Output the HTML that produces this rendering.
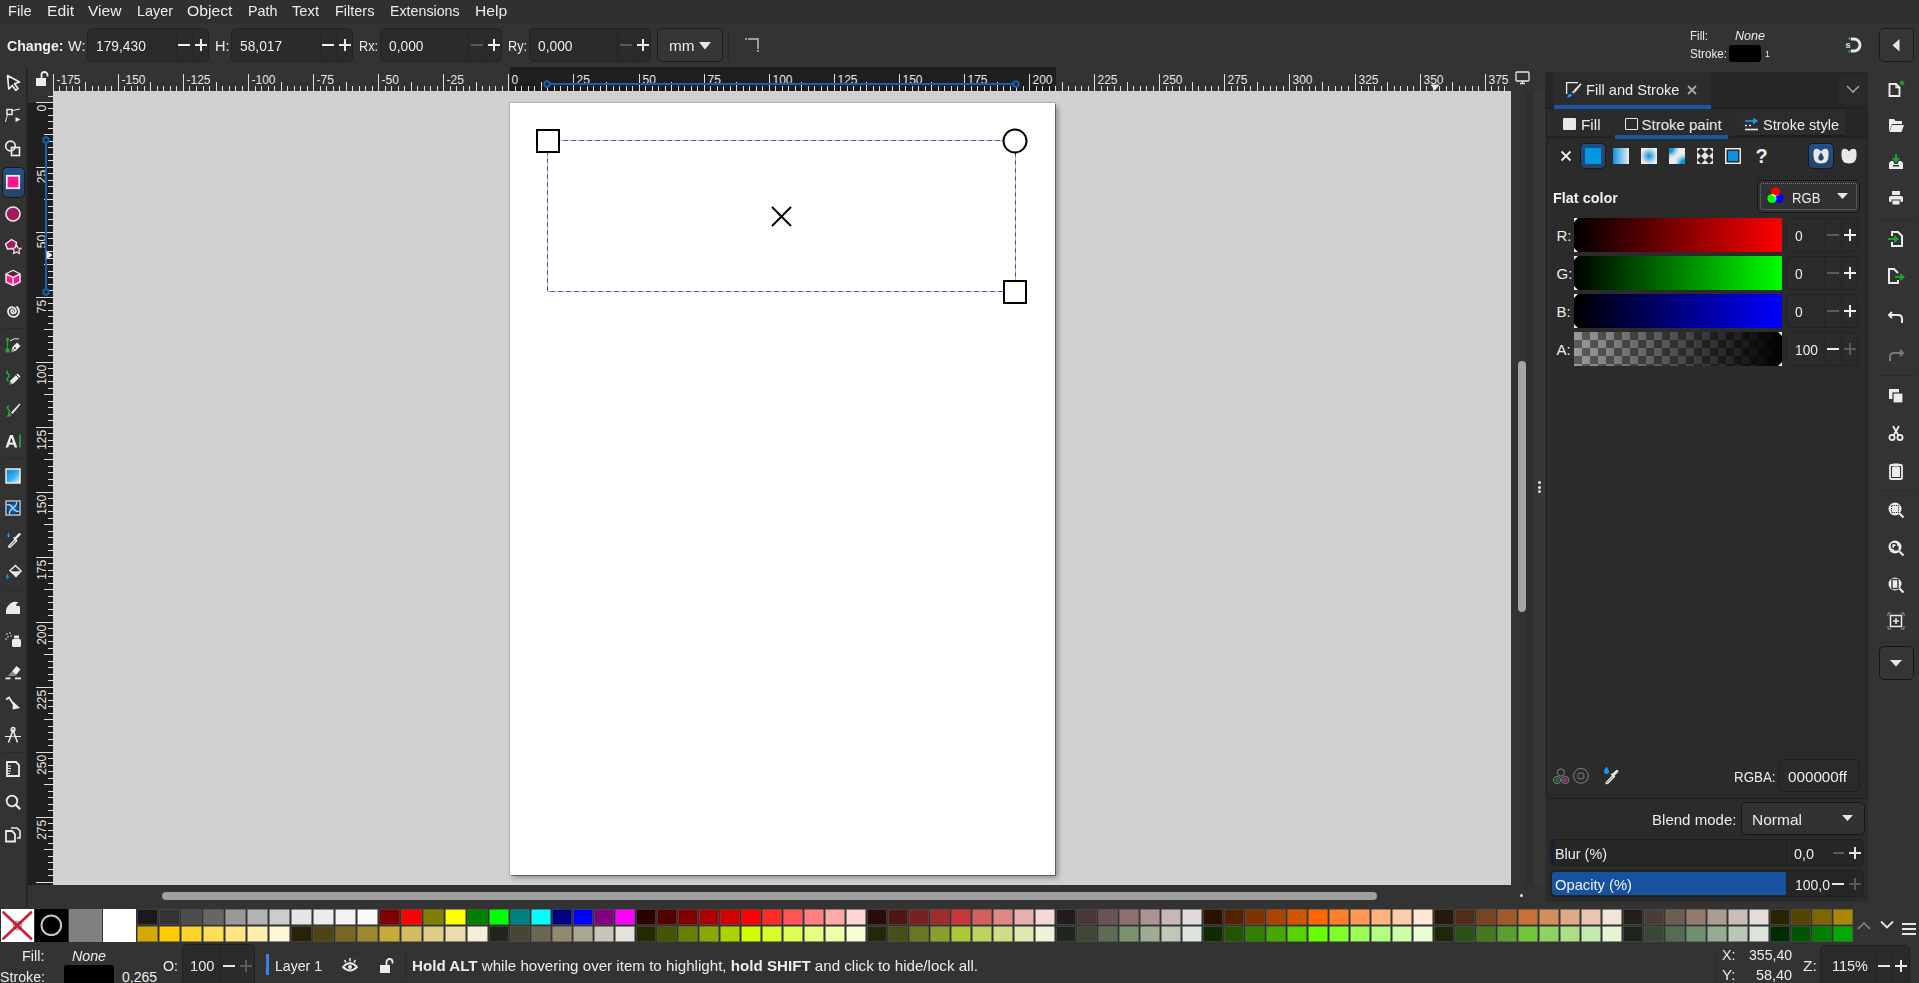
<!DOCTYPE html><html><head><meta charset="utf-8"><style>
html,body{margin:0;padding:0;width:1919px;height:983px;overflow:hidden;background:#333333;font-family:"Liberation Sans", sans-serif;}
div{box-sizing:border-box;}
svg{position:absolute;overflow:visible;}
</style></head><body>
<div style="position:absolute;left:0px;top:0px;width:1919px;height:23px;background:#303030;border-bottom:1px solid #2a2a2a"></div>
<div style="position:absolute;left:7.5px;top:3px;font-size:15px;line-height:1;color:#ececec;white-space:nowrap;transform:scaleX(0.9770);transform-origin:0 0;">File</div>
<div style="position:absolute;left:46.5px;top:3px;font-size:15px;line-height:1;color:#ececec;white-space:nowrap;transform:scaleX(1.0486);transform-origin:0 0;">Edit</div>
<div style="position:absolute;left:88px;top:3px;font-size:15px;line-height:1;color:#ececec;white-space:nowrap;transform:scaleX(1.0393);transform-origin:0 0;">View</div>
<div style="position:absolute;left:136.5px;top:3px;font-size:15px;line-height:1;color:#ececec;white-space:nowrap;transform:scaleX(0.9592);transform-origin:0 0;">Layer</div>
<div style="position:absolute;left:187px;top:3px;font-size:15px;line-height:1;color:#ececec;white-space:nowrap;transform:scaleX(1.0494);transform-origin:0 0;">Object</div>
<div style="position:absolute;left:247.5px;top:3px;font-size:15px;line-height:1;color:#ececec;white-space:nowrap;transform:scaleX(0.9559);transform-origin:0 0;">Path</div>
<div style="position:absolute;left:292.3px;top:3px;font-size:15px;line-height:1;color:#ececec;white-space:nowrap;transform:scaleX(0.9813);transform-origin:0 0;">Text</div>
<div style="position:absolute;left:334.6px;top:3px;font-size:15px;line-height:1;color:#ececec;white-space:nowrap;transform:scaleX(0.9650);transform-origin:0 0;">Filters</div>
<div style="position:absolute;left:389.7px;top:3px;font-size:15px;line-height:1;color:#ececec;white-space:nowrap;transform:scaleX(0.9486);transform-origin:0 0;">Extensions</div>
<div style="position:absolute;left:474.6px;top:3px;font-size:15px;line-height:1;color:#ececec;white-space:nowrap;transform:scaleX(1.0440);transform-origin:0 0;">Help</div>
<div style="position:absolute;left:0px;top:23px;width:1919px;height:44px;background:#333333"></div>
<div style="position:absolute;left:6.5px;top:38px;font-size:15px;line-height:1;color:#f0f0f0;white-space:nowrap;transform:scaleX(0.9419);transform-origin:0 0;"><b>Change:</b></div>
<div style="position:absolute;left:67.5px;top:38px;font-size:15px;line-height:1;color:#ececec;white-space:nowrap;transform:scaleX(0.9689);transform-origin:0 0;">W:</div>
<div style="position:absolute;left:87px;top:28px;width:122px;height:34px;background:#2b2b2b;border:1px solid #222;border-radius:5px"></div>
<div style="position:absolute;left:176px;top:29px;width:1px;height:32px;background:#262626"></div>
<div style="position:absolute;left:192px;top:29px;width:1px;height:32px;background:#262626"></div>
<div style="position:absolute;left:96px;top:37.5px;font-size:15px;line-height:1;color:#ececec;white-space:nowrap;transform:scaleX(0.9200);transform-origin:0 0;">179,430</div>
<div style="position:absolute;left:178.0px;top:44.0px;width:12px;height:2px;background:#ececec"></div>
<div style="position:absolute;left:194.5px;top:44.0px;width:12px;height:2px;background:#ececec"></div>
<div style="position:absolute;left:199.5px;top:39.0px;width:2px;height:12px;background:#ececec"></div>
<div style="position:absolute;left:215px;top:38px;font-size:15px;line-height:1;color:#ececec;white-space:nowrap;transform:scaleX(0.9667);transform-origin:0 0;">H:</div>
<div style="position:absolute;left:231px;top:28px;width:122px;height:34px;background:#2b2b2b;border:1px solid #222;border-radius:5px"></div>
<div style="position:absolute;left:320px;top:29px;width:1px;height:32px;background:#262626"></div>
<div style="position:absolute;left:336px;top:29px;width:1px;height:32px;background:#262626"></div>
<div style="position:absolute;left:240px;top:37.5px;font-size:15px;line-height:1;color:#ececec;white-space:nowrap;transform:scaleX(0.9200);transform-origin:0 0;">58,017</div>
<div style="position:absolute;left:322.0px;top:44.0px;width:12px;height:2px;background:#ececec"></div>
<div style="position:absolute;left:338.5px;top:44.0px;width:12px;height:2px;background:#ececec"></div>
<div style="position:absolute;left:343.5px;top:39.0px;width:2px;height:12px;background:#ececec"></div>
<div style="position:absolute;left:359px;top:38px;font-size:15px;line-height:1;color:#ececec;white-space:nowrap;transform:scaleX(0.8444);transform-origin:0 0;">Rx:</div>
<div style="position:absolute;left:380px;top:28px;width:122px;height:34px;background:#2b2b2b;border:1px solid #222;border-radius:5px"></div>
<div style="position:absolute;left:468px;top:29px;width:1px;height:32px;background:#262626"></div>
<div style="position:absolute;left:485px;top:29px;width:1px;height:32px;background:#262626"></div>
<div style="position:absolute;left:389px;top:37.5px;font-size:15px;line-height:1;color:#ececec;white-space:nowrap;transform:scaleX(0.9200);transform-origin:0 0;">0,000</div>
<div style="position:absolute;left:470.5px;top:44.0px;width:12px;height:2px;background:#5a5a5a"></div>
<div style="position:absolute;left:487.5px;top:44.0px;width:12px;height:2px;background:#ececec"></div>
<div style="position:absolute;left:492.5px;top:39.0px;width:2px;height:12px;background:#ececec"></div>
<div style="position:absolute;left:508px;top:38px;font-size:15px;line-height:1;color:#ececec;white-space:nowrap;transform:scaleX(0.8444);transform-origin:0 0;">Ry:</div>
<div style="position:absolute;left:529px;top:28px;width:122px;height:34px;background:#2b2b2b;border:1px solid #222;border-radius:5px"></div>
<div style="position:absolute;left:617px;top:29px;width:1px;height:32px;background:#262626"></div>
<div style="position:absolute;left:634px;top:29px;width:1px;height:32px;background:#262626"></div>
<div style="position:absolute;left:538px;top:37.5px;font-size:15px;line-height:1;color:#ececec;white-space:nowrap;transform:scaleX(0.9200);transform-origin:0 0;">0,000</div>
<div style="position:absolute;left:619.5px;top:44.0px;width:12px;height:2px;background:#5a5a5a"></div>
<div style="position:absolute;left:636.5px;top:44.0px;width:12px;height:2px;background:#ececec"></div>
<div style="position:absolute;left:641.5px;top:39.0px;width:2px;height:12px;background:#ececec"></div>
<div style="position:absolute;left:657px;top:28px;width:66px;height:34px;background:#353535;border:1px solid #1c1c1c;border-radius:5px"></div>
<div style="position:absolute;left:669px;top:38px;font-size:15px;line-height:1;color:#ececec;white-space:nowrap;transform:scaleX(1.0200);transform-origin:0 0;">mm</div>
<svg style="left:699px;top:41.5px" width="12" height="8"><path d="M0 0 L12 0 L6 7.5 Z" fill="#e6e6e6"/></svg>
<div style="position:absolute;left:728px;top:30px;width:1px;height:32px;background:#2a2a2a"></div>
<svg style="left:744px;top:37px" width="16" height="16"><path d="M1 1 H3 V3 H1 Z M4 1 H15 V12 H13 V3 H4 Z M13 13 H15 V15 H13 Z" fill="#9a9a9a"/></svg>
<div style="position:absolute;left:1690px;top:30px;font-size:12px;line-height:1;color:#ececec;white-space:nowrap;transform:scaleX(0.9640);transform-origin:0 0;">Fill:</div>
<div style="position:absolute;left:1735px;top:30px;font-size:12px;line-height:1;color:#ececec;white-space:nowrap;transform:scaleX(1.0458);transform-origin:0 0;"><i>None</i></div>
<div style="position:absolute;left:1690px;top:48px;font-size:12px;line-height:1;color:#ececec;white-space:nowrap;transform:scaleX(0.9737);transform-origin:0 0;">Stroke:</div>
<div style="position:absolute;left:1729px;top:45px;width:32px;height:17px;background:#000;border-radius:3px"></div>
<div style="position:absolute;left:1765px;top:50px;font-size:9px;line-height:1;color:#ececec;white-space:nowrap;transform:scaleX(0.9500);transform-origin:0 0;">1</div>
<svg style="left:1844px;top:35px" width="20" height="20"><path d="M7 4 H10 A6 6 0 0 1 10 16 H7" stroke="#e6e6e6" stroke-width="3" fill="none"/><circle cx="5.5" cy="3.6" r="1.4" fill="#1fa030"/><circle cx="5.5" cy="16.4" r="1.4" fill="#1fa030"/><text x="1.5" y="13" font-size="9" font-weight="bold" fill="#e6e6e6" font-family="Liberation Sans">s</text></svg>
<div style="position:absolute;left:1879px;top:28px;width:35px;height:34px;background:#353535;border:1px solid #1c1c1c;border-radius:5px"></div>
<svg style="left:1892px;top:38.5px" width="10" height="13"><path d="M7.5 0 V12.5 L0.5 6.25 Z" fill="#e6e6e6"/></svg>
<div style="position:absolute;left:0px;top:67px;width:26px;height:840px;background:#333333"></div>
<div style="position:absolute;left:26px;top:67px;width:2px;height:840px;background:#262626"></div>
<div style="position:absolute;left:1.5px;top:166.5px;width:23px;height:31px;background:linear-gradient(#1f4f8e,#264466);border:1px solid #1a1a1a;border-radius:5px"></div>
<svg style="left:4px;top:74px" width="18" height="18" viewBox="0 0 18 18"><path d="M3.5 1.5 L15.5 8 L10.5 9.8 L14 14.5 L11.8 16.3 L8.3 11.5 L4.8 15 Z" fill="#2a2a2a" stroke="#ececec" stroke-width="1.7" stroke-linejoin="round"/></svg>
<svg style="left:4px;top:106px" width="18" height="18" viewBox="0 0 18 18"><rect x="3" y="3.5" width="5" height="5" fill="#333" stroke="#ececec" stroke-width="1.5"/><path d="M1.5 16 Q2.5 11 3.5 9 M8 5 Q12 3.5 16 3" stroke="#ececec" stroke-width="1" fill="none"/><path d="M11.5 11 L16.5 13.5 L11.5 16 Z" fill="#ececec"/></svg>
<svg style="left:4px;top:139px" width="18" height="18" viewBox="0 0 18 18"><circle cx="6.5" cy="7" r="4.8" fill="none" stroke="#ececec" stroke-width="1.7"/><rect x="7.5" y="8.5" width="8" height="8" fill="none" stroke="#ececec" stroke-width="1.7"/></svg>
<svg style="left:4px;top:173px" width="18" height="18" viewBox="0 0 18 18"><rect x="2.8" y="2.8" width="12.4" height="12.4" fill="#ff1493" stroke="#ececec" stroke-width="1.8"/></svg>
<svg style="left:4px;top:205px" width="18" height="18" viewBox="0 0 18 18"><circle cx="9" cy="9" r="7" fill="#a6195e" stroke="#ececec" stroke-width="1.6"/></svg>
<svg style="left:4px;top:237px" width="18" height="18" viewBox="0 0 18 18"><path d="M1.5 7 L7.5 2.5 L12.5 5.5 L11 11.5 L3.5 12 Z" fill="#a6195e" stroke="#ececec" stroke-width="1.4"/><path d="M12.5 8 L14 11 L17 11.3 L14.8 13.4 L15.4 16.5 L12.5 15 L9.6 16.5 L10.2 13.4 L8 11.3 L11 11 Z" fill="#6a2048" stroke="#ececec" stroke-width="1.2"/></svg>
<svg style="left:4px;top:269px" width="18" height="18" viewBox="0 0 18 18"><path d="M9 1.5 L16 5 V13 L9 16.5 L2 13 V5 Z" fill="#ff1493" stroke="#ececec" stroke-width="1.5"/><path d="M2.6 5.1 L9 1.9 L15.4 5.1 L9 8.4 Z" fill="#5a2040"/><path d="M2 5 L9 8.5 L16 5 M9 8.5 V16.5" stroke="#ececec" stroke-width="1.5" fill="none"/></svg>
<svg style="left:4px;top:302px" width="18" height="18" viewBox="0 0 18 18"><path d="M9.5 9 a1.2 1.2 0 0 0 -2.4 0.3 a2.5 2.5 0 0 0 4.9 0.2 a4 4 0 0 0 -8 -0.5 a5.5 5.5 0 0 0 11 0.8 a6.5 6.5 0 0 0 -2 -4.8" fill="none" stroke="#ececec" stroke-width="1.8" stroke-linecap="round"/></svg>
<svg style="left:4px;top:336px" width="18" height="18" viewBox="0 0 18 18"><path d="M3.5 5 V13" stroke="#27a33a" stroke-width="1.2"/><circle cx="3.5" cy="3.5" r="1.8" fill="#27a33a"/><rect x="1.5" y="12.5" width="4" height="4" fill="#27a33a"/><path d="M6 5 Q10 1.5 15 3" stroke="#ececec" stroke-width="1" fill="none"/><path d="M7 16.5 L8.5 11 L13 6.5 L16.5 10 L12 14.5 Z" fill="#ececec"/><path d="M7.5 15.8 L10.5 12.8" stroke="#333" stroke-width="1"/><circle cx="11" cy="12" r="0.9" fill="#333"/></svg>
<svg style="left:4px;top:368px" width="18" height="18" viewBox="0 0 18 18"><path d="M4 3 Q1.5 4.5 4 6 Q6.5 7.5 4 9.5 Q2 11.5 4.5 13" stroke="#27a33a" stroke-width="1.6" fill="none"/><path d="M5.5 16.5 L6.5 12.5 L13.5 5.5 L16.5 8.5 L9.5 15.5 Z" fill="#ececec"/><path d="M5.5 16.5 L6.8 13.8 L8.2 15.2 Z" fill="#27a33a"/><path d="M12 7 L15 10" stroke="#333" stroke-width="1"/></svg>
<svg style="left:4px;top:400px" width="18" height="18" viewBox="0 0 18 18"><path d="M5 6 Q2 7.5 4.5 9.5 Q7 11.5 4 13.5" stroke="#27a33a" stroke-width="1.6" fill="none"/><path d="M3 17 Q3.5 13.5 6 13 L7.5 14.5 Q7 17 3 17 Z" fill="#27a33a"/><path d="M7 12.5 L15.5 3.5 L16.5 4.5 L8.5 14 Z" fill="#ececec"/></svg>
<svg style="left:4px;top:432px" width="18" height="18" viewBox="0 0 18 18"><path d="M1.5 15.5 L6 3 H8.8 L13.3 15.5 H10.6 L9.7 12.8 H5.1 L4.2 15.5 Z M5.8 10.6 H9 L7.4 5.7 Z" fill="#ececec"/><rect x="15" y="2.5" width="1.8" height="13" fill="#27a33a"/></svg>
<svg style="left:4px;top:467px" width="18" height="18" viewBox="0 0 18 18"><defs><linearGradient id="gt" x1="0" y1="0" x2="1" y2="1"><stop offset="0" stop-color="#0a78d0"/><stop offset="0.55" stop-color="#38b0f0"/><stop offset="1" stop-color="#e8f4fc"/></linearGradient></defs><rect x="2" y="2" width="14" height="14" fill="url(#gt)" stroke="#ececec" stroke-width="1.5"/></svg>
<svg style="left:4px;top:499px" width="18" height="18" viewBox="0 0 18 18"><defs><radialGradient id="mt"><stop offset="0" stop-color="#1a90e0"/><stop offset="1" stop-color="#0a2a50"/></radialGradient></defs><rect x="2" y="2" width="14" height="14" fill="url(#mt)" stroke="#d8d8d8" stroke-width="1.3"/><path d="M9 9 Q5 4 3 6 M9 9 Q14 5 12 3 M9 9 Q13 14 15 12 M9 9 Q4 13 6 15" stroke="#9ad4ff" stroke-width="1.5" fill="none"/></svg>
<svg style="left:4px;top:531px" width="18" height="18" viewBox="0 0 18 18"><path d="M4.5 1.5 Q2 5 4.5 6.5 Q7 5 4.5 1.5 Z" fill="#1a9ae0"/><path d="M5 16 L4.5 15.5 L11 8.5 L12.5 10 L6 16.5 Z" fill="none" stroke="#ececec" stroke-width="1.3"/><path d="M10 7 L14.5 2.5 Q15.5 1.5 16.5 2.5 Q17.5 3.5 16 4.5 L11.5 9 Z" fill="#ececec"/><path d="M9.5 6.5 L13 10" stroke="#ececec" stroke-width="1.6"/></svg>
<svg style="left:4px;top:563px" width="18" height="18" viewBox="0 0 18 18"><path d="M3.5 11 Q1 14.5 3.5 16 Q6 14.5 3.5 11 Z" fill="#1a9ae0"/><path d="M6 7.5 L11.5 2.5 L17 8 L12 13.5 Z" fill="none" stroke="#ececec" stroke-width="1.5"/><path d="M6.5 8 L11 8.5 L16 8 L12 13 Z" fill="#ececec"/></svg>
<svg style="left:4px;top:598px" width="18" height="18" viewBox="0 0 18 18"><path d="M2 16 V11.5 Q4 6 9 4 Q13 3 14.5 5 Q12 5 12 8 Q13.5 7.5 16 8.5 V16 Z" fill="#ececec"/></svg>
<svg style="left:4px;top:630px" width="18" height="18" viewBox="0 0 18 18"><rect x="8" y="9" width="9" height="8" rx="1.5" fill="#ececec"/><rect x="10" y="5.5" width="5" height="3" fill="#ececec"/><circle cx="3" cy="4" r="0.9" fill="#aaa"/><circle cx="6" cy="3" r="0.9" fill="#aaa"/><circle cx="4" cy="7" r="0.9" fill="#aaa"/><circle cx="7" cy="6" r="0.9" fill="#aaa"/><circle cx="2" cy="9" r="0.9" fill="#aaa"/></svg>
<svg style="left:4px;top:662px" width="18" height="18" viewBox="0 0 18 18"><path d="M8 9.5 L12.5 4 L16.5 7.5 L12 13 Z" fill="#ececec"/><path d="M4 13.5 L8 9.5 L12 13 L11 14 H6 Z" fill="#8a8a8a"/><rect x="1.5" y="15.5" width="5" height="1.8" fill="#ececec"/><rect x="11" y="15.5" width="6" height="1.8" fill="#ececec"/></svg>
<svg style="left:4px;top:694px" width="18" height="18" viewBox="0 0 18 18"><path d="M2 5.5 L5 3.5 Q8 8 10 11" stroke="#ececec" stroke-width="1.8" fill="none"/><path d="M9 7.5 L16 14 L8.5 15.5 Z" fill="#ececec"/></svg>
<svg style="left:4px;top:726px" width="18" height="18" viewBox="0 0 18 18"><path d="M4.5 16.5 L9 4 L13.5 16.5" stroke="#ececec" stroke-width="1.5" fill="none"/><circle cx="9" cy="3.5" r="2" fill="none" stroke="#ececec" stroke-width="1.3"/><path d="M1 10.5 H17" stroke="#ececec" stroke-width="1"/><circle cx="9" cy="10.5" r="1" fill="#999"/></svg>
<svg style="left:4px;top:760px" width="18" height="18" viewBox="0 0 18 18"><path d="M3 2 H12 L15 5 V16 H3 Z" fill="none" stroke="#ececec" stroke-width="1.8"/><path d="M4 6 H7 M4 8.5 H7 M4 11 H7 M4 13.5 H6" stroke="#ececec" stroke-width="1.1"/></svg>
<svg style="left:4px;top:793px" width="18" height="18" viewBox="0 0 18 18"><circle cx="8" cy="8" r="5.3" fill="none" stroke="#ececec" stroke-width="1.8"/><path d="M12 12 L15.5 15.5" stroke="#ececec" stroke-width="2.4" stroke-linecap="round"/></svg>
<svg style="left:4px;top:825px" width="18" height="18" viewBox="0 0 18 18"><path d="M7 3 H13 L16 6 V13 H13" fill="none" stroke="#ececec" stroke-width="1.6"/><path d="M2 6 H8 L11 9 V16.5 H2 Z" fill="none" stroke="#ececec" stroke-width="1.8"/></svg>
<div style="position:absolute;left:3px;top:328px;width:21px;height:1px;background:#2a2a2a"></div>
<div style="position:absolute;left:3px;top:458px;width:21px;height:1px;background:#2a2a2a"></div>
<div style="position:absolute;left:3px;top:590px;width:21px;height:1px;background:#2a2a2a"></div>
<div style="position:absolute;left:3px;top:752px;width:21px;height:1px;background:#2a2a2a"></div>
<div style="position:absolute;left:28px;top:67px;width:25px;height:24px;background:#333333"></div>
<svg style="left:35px;top:71px" width="14" height="16" viewBox="0 0 14 16"><rect x="1" y="7" width="10" height="8" fill="#ececec"/><path d="M6.5 7 V4 A3 3 0 0 1 12.5 4 V5.5" stroke="#ececec" stroke-width="1.8" fill="none"/></svg>
<div style="position:absolute;left:53px;top:67px;width:1458px;height:24px;background:#333333"></div>
<div style="position:absolute;left:509.5px;top:67px;width:546px;height:24px;background:#1f1f1f"></div>
<svg style="left:53px;top:67px" width="1458" height="24"><path d="M0.5 7 V24" stroke="#e0e0e0" stroke-width="1"/><text x="3.5" y="16.5" font-size="12" fill="#e6e6e6" font-family="Liberation Sans">-175</text><path d="M6.5 19 V24" stroke="#e0e0e0" stroke-width="1"/><path d="M13.5 19 V24" stroke="#e0e0e0" stroke-width="1"/><path d="M19.5 19 V24" stroke="#e0e0e0" stroke-width="1"/><path d="M26.5 19 V24" stroke="#e0e0e0" stroke-width="1"/><path d="M32.5 15 V24" stroke="#e0e0e0" stroke-width="1"/><path d="M39.5 19 V24" stroke="#e0e0e0" stroke-width="1"/><path d="M45.5 19 V24" stroke="#e0e0e0" stroke-width="1"/><path d="M52.5 19 V24" stroke="#e0e0e0" stroke-width="1"/><path d="M58.5 19 V24" stroke="#e0e0e0" stroke-width="1"/><path d="M65.5 7 V24" stroke="#e0e0e0" stroke-width="1"/><text x="68.5" y="16.5" font-size="12" fill="#e6e6e6" font-family="Liberation Sans">-150</text><path d="M71.5 19 V24" stroke="#e0e0e0" stroke-width="1"/><path d="M78.5 19 V24" stroke="#e0e0e0" stroke-width="1"/><path d="M84.5 19 V24" stroke="#e0e0e0" stroke-width="1"/><path d="M91.5 19 V24" stroke="#e0e0e0" stroke-width="1"/><path d="M97.5 15 V24" stroke="#e0e0e0" stroke-width="1"/><path d="M104.5 19 V24" stroke="#e0e0e0" stroke-width="1"/><path d="M110.5 19 V24" stroke="#e0e0e0" stroke-width="1"/><path d="M117.5 19 V24" stroke="#e0e0e0" stroke-width="1"/><path d="M123.5 19 V24" stroke="#e0e0e0" stroke-width="1"/><path d="M130.5 7 V24" stroke="#e0e0e0" stroke-width="1"/><text x="133.5" y="16.5" font-size="12" fill="#e6e6e6" font-family="Liberation Sans">-125</text><path d="M136.5 19 V24" stroke="#e0e0e0" stroke-width="1"/><path d="M143.5 19 V24" stroke="#e0e0e0" stroke-width="1"/><path d="M150.5 19 V24" stroke="#e0e0e0" stroke-width="1"/><path d="M156.5 19 V24" stroke="#e0e0e0" stroke-width="1"/><path d="M163.5 15 V24" stroke="#e0e0e0" stroke-width="1"/><path d="M169.5 19 V24" stroke="#e0e0e0" stroke-width="1"/><path d="M176.5 19 V24" stroke="#e0e0e0" stroke-width="1"/><path d="M182.5 19 V24" stroke="#e0e0e0" stroke-width="1"/><path d="M189.5 19 V24" stroke="#e0e0e0" stroke-width="1"/><path d="M195.5 7 V24" stroke="#e0e0e0" stroke-width="1"/><text x="198.5" y="16.5" font-size="12" fill="#e6e6e6" font-family="Liberation Sans">-100</text><path d="M202.5 19 V24" stroke="#e0e0e0" stroke-width="1"/><path d="M208.5 19 V24" stroke="#e0e0e0" stroke-width="1"/><path d="M215.5 19 V24" stroke="#e0e0e0" stroke-width="1"/><path d="M221.5 19 V24" stroke="#e0e0e0" stroke-width="1"/><path d="M228.5 15 V24" stroke="#e0e0e0" stroke-width="1"/><path d="M234.5 19 V24" stroke="#e0e0e0" stroke-width="1"/><path d="M241.5 19 V24" stroke="#e0e0e0" stroke-width="1"/><path d="M247.5 19 V24" stroke="#e0e0e0" stroke-width="1"/><path d="M254.5 19 V24" stroke="#e0e0e0" stroke-width="1"/><path d="M260.5 7 V24" stroke="#e0e0e0" stroke-width="1"/><text x="263.5" y="16.5" font-size="12" fill="#e6e6e6" font-family="Liberation Sans">-75</text><path d="M267.5 19 V24" stroke="#e0e0e0" stroke-width="1"/><path d="M273.5 19 V24" stroke="#e0e0e0" stroke-width="1"/><path d="M280.5 19 V24" stroke="#e0e0e0" stroke-width="1"/><path d="M286.5 19 V24" stroke="#e0e0e0" stroke-width="1"/><path d="M293.5 15 V24" stroke="#e0e0e0" stroke-width="1"/><path d="M299.5 19 V24" stroke="#e0e0e0" stroke-width="1"/><path d="M306.5 19 V24" stroke="#e0e0e0" stroke-width="1"/><path d="M312.5 19 V24" stroke="#e0e0e0" stroke-width="1"/><path d="M319.5 19 V24" stroke="#e0e0e0" stroke-width="1"/><path d="M325.5 7 V24" stroke="#e0e0e0" stroke-width="1"/><text x="328.5" y="16.5" font-size="12" fill="#e6e6e6" font-family="Liberation Sans">-50</text><path d="M332.5 19 V24" stroke="#e0e0e0" stroke-width="1"/><path d="M338.5 19 V24" stroke="#e0e0e0" stroke-width="1"/><path d="M345.5 19 V24" stroke="#e0e0e0" stroke-width="1"/><path d="M351.5 19 V24" stroke="#e0e0e0" stroke-width="1"/><path d="M358.5 15 V24" stroke="#e0e0e0" stroke-width="1"/><path d="M364.5 19 V24" stroke="#e0e0e0" stroke-width="1"/><path d="M371.5 19 V24" stroke="#e0e0e0" stroke-width="1"/><path d="M377.5 19 V24" stroke="#e0e0e0" stroke-width="1"/><path d="M384.5 19 V24" stroke="#e0e0e0" stroke-width="1"/><path d="M390.5 7 V24" stroke="#e0e0e0" stroke-width="1"/><text x="393.5" y="16.5" font-size="12" fill="#e6e6e6" font-family="Liberation Sans">-25</text><path d="M397.5 19 V24" stroke="#e0e0e0" stroke-width="1"/><path d="M403.5 19 V24" stroke="#e0e0e0" stroke-width="1"/><path d="M410.5 19 V24" stroke="#e0e0e0" stroke-width="1"/><path d="M416.5 19 V24" stroke="#e0e0e0" stroke-width="1"/><path d="M423.5 15 V24" stroke="#e0e0e0" stroke-width="1"/><path d="M429.5 19 V24" stroke="#e0e0e0" stroke-width="1"/><path d="M436.5 19 V24" stroke="#e0e0e0" stroke-width="1"/><path d="M442.5 19 V24" stroke="#e0e0e0" stroke-width="1"/><path d="M449.5 19 V24" stroke="#e0e0e0" stroke-width="1"/><path d="M455.5 7 V24" stroke="#e0e0e0" stroke-width="1"/><text x="458.5" y="16.5" font-size="12" fill="#e6e6e6" font-family="Liberation Sans">0</text><path d="M462.5 19 V24" stroke="#e0e0e0" stroke-width="1"/><path d="M468.5 19 V24" stroke="#e0e0e0" stroke-width="1"/><path d="M475.5 19 V24" stroke="#e0e0e0" stroke-width="1"/><path d="M481.5 19 V24" stroke="#e0e0e0" stroke-width="1"/><path d="M488.5 15 V24" stroke="#e0e0e0" stroke-width="1"/><path d="M494.5 19 V24" stroke="#e0e0e0" stroke-width="1"/><path d="M501.5 19 V24" stroke="#e0e0e0" stroke-width="1"/><path d="M507.5 19 V24" stroke="#e0e0e0" stroke-width="1"/><path d="M514.5 19 V24" stroke="#e0e0e0" stroke-width="1"/><path d="M520.5 7 V24" stroke="#e0e0e0" stroke-width="1"/><text x="523.5" y="16.5" font-size="12" fill="#e6e6e6" font-family="Liberation Sans">25</text><path d="M527.5 19 V24" stroke="#e0e0e0" stroke-width="1"/><path d="M534.5 19 V24" stroke="#e0e0e0" stroke-width="1"/><path d="M540.5 19 V24" stroke="#e0e0e0" stroke-width="1"/><path d="M547.5 19 V24" stroke="#e0e0e0" stroke-width="1"/><path d="M553.5 15 V24" stroke="#e0e0e0" stroke-width="1"/><path d="M560.5 19 V24" stroke="#e0e0e0" stroke-width="1"/><path d="M566.5 19 V24" stroke="#e0e0e0" stroke-width="1"/><path d="M573.5 19 V24" stroke="#e0e0e0" stroke-width="1"/><path d="M579.5 19 V24" stroke="#e0e0e0" stroke-width="1"/><path d="M586.5 7 V24" stroke="#e0e0e0" stroke-width="1"/><text x="589.5" y="16.5" font-size="12" fill="#e6e6e6" font-family="Liberation Sans">50</text><path d="M592.5 19 V24" stroke="#e0e0e0" stroke-width="1"/><path d="M599.5 19 V24" stroke="#e0e0e0" stroke-width="1"/><path d="M605.5 19 V24" stroke="#e0e0e0" stroke-width="1"/><path d="M612.5 19 V24" stroke="#e0e0e0" stroke-width="1"/><path d="M618.5 15 V24" stroke="#e0e0e0" stroke-width="1"/><path d="M625.5 19 V24" stroke="#e0e0e0" stroke-width="1"/><path d="M631.5 19 V24" stroke="#e0e0e0" stroke-width="1"/><path d="M638.5 19 V24" stroke="#e0e0e0" stroke-width="1"/><path d="M644.5 19 V24" stroke="#e0e0e0" stroke-width="1"/><path d="M651.5 7 V24" stroke="#e0e0e0" stroke-width="1"/><text x="654.5" y="16.5" font-size="12" fill="#e6e6e6" font-family="Liberation Sans">75</text><path d="M657.5 19 V24" stroke="#e0e0e0" stroke-width="1"/><path d="M664.5 19 V24" stroke="#e0e0e0" stroke-width="1"/><path d="M670.5 19 V24" stroke="#e0e0e0" stroke-width="1"/><path d="M677.5 19 V24" stroke="#e0e0e0" stroke-width="1"/><path d="M683.5 15 V24" stroke="#e0e0e0" stroke-width="1"/><path d="M690.5 19 V24" stroke="#e0e0e0" stroke-width="1"/><path d="M696.5 19 V24" stroke="#e0e0e0" stroke-width="1"/><path d="M703.5 19 V24" stroke="#e0e0e0" stroke-width="1"/><path d="M709.5 19 V24" stroke="#e0e0e0" stroke-width="1"/><path d="M716.5 7 V24" stroke="#e0e0e0" stroke-width="1"/><text x="719.5" y="16.5" font-size="12" fill="#e6e6e6" font-family="Liberation Sans">100</text><path d="M722.5 19 V24" stroke="#e0e0e0" stroke-width="1"/><path d="M729.5 19 V24" stroke="#e0e0e0" stroke-width="1"/><path d="M735.5 19 V24" stroke="#e0e0e0" stroke-width="1"/><path d="M742.5 19 V24" stroke="#e0e0e0" stroke-width="1"/><path d="M748.5 15 V24" stroke="#e0e0e0" stroke-width="1"/><path d="M755.5 19 V24" stroke="#e0e0e0" stroke-width="1"/><path d="M761.5 19 V24" stroke="#e0e0e0" stroke-width="1"/><path d="M768.5 19 V24" stroke="#e0e0e0" stroke-width="1"/><path d="M774.5 19 V24" stroke="#e0e0e0" stroke-width="1"/><path d="M781.5 7 V24" stroke="#e0e0e0" stroke-width="1"/><text x="784.5" y="16.5" font-size="12" fill="#e6e6e6" font-family="Liberation Sans">125</text><path d="M787.5 19 V24" stroke="#e0e0e0" stroke-width="1"/><path d="M794.5 19 V24" stroke="#e0e0e0" stroke-width="1"/><path d="M800.5 19 V24" stroke="#e0e0e0" stroke-width="1"/><path d="M807.5 19 V24" stroke="#e0e0e0" stroke-width="1"/><path d="M813.5 15 V24" stroke="#e0e0e0" stroke-width="1"/><path d="M820.5 19 V24" stroke="#e0e0e0" stroke-width="1"/><path d="M826.5 19 V24" stroke="#e0e0e0" stroke-width="1"/><path d="M833.5 19 V24" stroke="#e0e0e0" stroke-width="1"/><path d="M839.5 19 V24" stroke="#e0e0e0" stroke-width="1"/><path d="M846.5 7 V24" stroke="#e0e0e0" stroke-width="1"/><text x="849.5" y="16.5" font-size="12" fill="#e6e6e6" font-family="Liberation Sans">150</text><path d="M852.5 19 V24" stroke="#e0e0e0" stroke-width="1"/><path d="M859.5 19 V24" stroke="#e0e0e0" stroke-width="1"/><path d="M865.5 19 V24" stroke="#e0e0e0" stroke-width="1"/><path d="M872.5 19 V24" stroke="#e0e0e0" stroke-width="1"/><path d="M878.5 15 V24" stroke="#e0e0e0" stroke-width="1"/><path d="M885.5 19 V24" stroke="#e0e0e0" stroke-width="1"/><path d="M891.5 19 V24" stroke="#e0e0e0" stroke-width="1"/><path d="M898.5 19 V24" stroke="#e0e0e0" stroke-width="1"/><path d="M904.5 19 V24" stroke="#e0e0e0" stroke-width="1"/><path d="M911.5 7 V24" stroke="#e0e0e0" stroke-width="1"/><text x="914.5" y="16.5" font-size="12" fill="#e6e6e6" font-family="Liberation Sans">175</text><path d="M918.5 19 V24" stroke="#e0e0e0" stroke-width="1"/><path d="M924.5 19 V24" stroke="#e0e0e0" stroke-width="1"/><path d="M931.5 19 V24" stroke="#e0e0e0" stroke-width="1"/><path d="M937.5 19 V24" stroke="#e0e0e0" stroke-width="1"/><path d="M944.5 15 V24" stroke="#e0e0e0" stroke-width="1"/><path d="M950.5 19 V24" stroke="#e0e0e0" stroke-width="1"/><path d="M957.5 19 V24" stroke="#e0e0e0" stroke-width="1"/><path d="M963.5 19 V24" stroke="#e0e0e0" stroke-width="1"/><path d="M970.5 19 V24" stroke="#e0e0e0" stroke-width="1"/><path d="M976.5 7 V24" stroke="#e0e0e0" stroke-width="1"/><text x="979.5" y="16.5" font-size="12" fill="#e6e6e6" font-family="Liberation Sans">200</text><path d="M983.5 19 V24" stroke="#e0e0e0" stroke-width="1"/><path d="M989.5 19 V24" stroke="#e0e0e0" stroke-width="1"/><path d="M996.5 19 V24" stroke="#e0e0e0" stroke-width="1"/><path d="M1002.5 19 V24" stroke="#e0e0e0" stroke-width="1"/><path d="M1009.5 15 V24" stroke="#e0e0e0" stroke-width="1"/><path d="M1015.5 19 V24" stroke="#e0e0e0" stroke-width="1"/><path d="M1022.5 19 V24" stroke="#e0e0e0" stroke-width="1"/><path d="M1028.5 19 V24" stroke="#e0e0e0" stroke-width="1"/><path d="M1035.5 19 V24" stroke="#e0e0e0" stroke-width="1"/><path d="M1041.5 7 V24" stroke="#e0e0e0" stroke-width="1"/><text x="1044.5" y="16.5" font-size="12" fill="#e6e6e6" font-family="Liberation Sans">225</text><path d="M1048.5 19 V24" stroke="#e0e0e0" stroke-width="1"/><path d="M1054.5 19 V24" stroke="#e0e0e0" stroke-width="1"/><path d="M1061.5 19 V24" stroke="#e0e0e0" stroke-width="1"/><path d="M1067.5 19 V24" stroke="#e0e0e0" stroke-width="1"/><path d="M1074.5 15 V24" stroke="#e0e0e0" stroke-width="1"/><path d="M1080.5 19 V24" stroke="#e0e0e0" stroke-width="1"/><path d="M1087.5 19 V24" stroke="#e0e0e0" stroke-width="1"/><path d="M1093.5 19 V24" stroke="#e0e0e0" stroke-width="1"/><path d="M1100.5 19 V24" stroke="#e0e0e0" stroke-width="1"/><path d="M1106.5 7 V24" stroke="#e0e0e0" stroke-width="1"/><text x="1109.5" y="16.5" font-size="12" fill="#e6e6e6" font-family="Liberation Sans">250</text><path d="M1113.5 19 V24" stroke="#e0e0e0" stroke-width="1"/><path d="M1119.5 19 V24" stroke="#e0e0e0" stroke-width="1"/><path d="M1126.5 19 V24" stroke="#e0e0e0" stroke-width="1"/><path d="M1132.5 19 V24" stroke="#e0e0e0" stroke-width="1"/><path d="M1139.5 15 V24" stroke="#e0e0e0" stroke-width="1"/><path d="M1145.5 19 V24" stroke="#e0e0e0" stroke-width="1"/><path d="M1152.5 19 V24" stroke="#e0e0e0" stroke-width="1"/><path d="M1158.5 19 V24" stroke="#e0e0e0" stroke-width="1"/><path d="M1165.5 19 V24" stroke="#e0e0e0" stroke-width="1"/><path d="M1171.5 7 V24" stroke="#e0e0e0" stroke-width="1"/><text x="1174.5" y="16.5" font-size="12" fill="#e6e6e6" font-family="Liberation Sans">275</text><path d="M1178.5 19 V24" stroke="#e0e0e0" stroke-width="1"/><path d="M1184.5 19 V24" stroke="#e0e0e0" stroke-width="1"/><path d="M1191.5 19 V24" stroke="#e0e0e0" stroke-width="1"/><path d="M1197.5 19 V24" stroke="#e0e0e0" stroke-width="1"/><path d="M1204.5 15 V24" stroke="#e0e0e0" stroke-width="1"/><path d="M1210.5 19 V24" stroke="#e0e0e0" stroke-width="1"/><path d="M1217.5 19 V24" stroke="#e0e0e0" stroke-width="1"/><path d="M1223.5 19 V24" stroke="#e0e0e0" stroke-width="1"/><path d="M1230.5 19 V24" stroke="#e0e0e0" stroke-width="1"/><path d="M1236.5 7 V24" stroke="#e0e0e0" stroke-width="1"/><text x="1239.5" y="16.5" font-size="12" fill="#e6e6e6" font-family="Liberation Sans">300</text><path d="M1243.5 19 V24" stroke="#e0e0e0" stroke-width="1"/><path d="M1249.5 19 V24" stroke="#e0e0e0" stroke-width="1"/><path d="M1256.5 19 V24" stroke="#e0e0e0" stroke-width="1"/><path d="M1262.5 19 V24" stroke="#e0e0e0" stroke-width="1"/><path d="M1269.5 15 V24" stroke="#e0e0e0" stroke-width="1"/><path d="M1275.5 19 V24" stroke="#e0e0e0" stroke-width="1"/><path d="M1282.5 19 V24" stroke="#e0e0e0" stroke-width="1"/><path d="M1288.5 19 V24" stroke="#e0e0e0" stroke-width="1"/><path d="M1295.5 19 V24" stroke="#e0e0e0" stroke-width="1"/><path d="M1302.5 7 V24" stroke="#e0e0e0" stroke-width="1"/><text x="1305.5" y="16.5" font-size="12" fill="#e6e6e6" font-family="Liberation Sans">325</text><path d="M1308.5 19 V24" stroke="#e0e0e0" stroke-width="1"/><path d="M1315.5 19 V24" stroke="#e0e0e0" stroke-width="1"/><path d="M1321.5 19 V24" stroke="#e0e0e0" stroke-width="1"/><path d="M1328.5 19 V24" stroke="#e0e0e0" stroke-width="1"/><path d="M1334.5 15 V24" stroke="#e0e0e0" stroke-width="1"/><path d="M1341.5 19 V24" stroke="#e0e0e0" stroke-width="1"/><path d="M1347.5 19 V24" stroke="#e0e0e0" stroke-width="1"/><path d="M1354.5 19 V24" stroke="#e0e0e0" stroke-width="1"/><path d="M1360.5 19 V24" stroke="#e0e0e0" stroke-width="1"/><path d="M1367.5 7 V24" stroke="#e0e0e0" stroke-width="1"/><text x="1370.5" y="16.5" font-size="12" fill="#e6e6e6" font-family="Liberation Sans">350</text><path d="M1373.5 19 V24" stroke="#e0e0e0" stroke-width="1"/><path d="M1380.5 19 V24" stroke="#e0e0e0" stroke-width="1"/><path d="M1386.5 19 V24" stroke="#e0e0e0" stroke-width="1"/><path d="M1393.5 19 V24" stroke="#e0e0e0" stroke-width="1"/><path d="M1399.5 15 V24" stroke="#e0e0e0" stroke-width="1"/><path d="M1406.5 19 V24" stroke="#e0e0e0" stroke-width="1"/><path d="M1412.5 19 V24" stroke="#e0e0e0" stroke-width="1"/><path d="M1419.5 19 V24" stroke="#e0e0e0" stroke-width="1"/><path d="M1425.5 19 V24" stroke="#e0e0e0" stroke-width="1"/><path d="M1432.5 7 V24" stroke="#e0e0e0" stroke-width="1"/><text x="1435.5" y="16.5" font-size="12" fill="#e6e6e6" font-family="Liberation Sans">375</text><path d="M1438.5 19 V24" stroke="#e0e0e0" stroke-width="1"/><path d="M1445.5 19 V24" stroke="#e0e0e0" stroke-width="1"/><path d="M1451.5 19 V24" stroke="#e0e0e0" stroke-width="1"/></svg>
<svg style="left:540px;top:78px" width="485" height="12"><path d="M7 6 H476" stroke="#1c5fb0" stroke-width="2"/><circle cx="7" cy="6" r="2.8" fill="#1f1f1f" stroke="#1c5fb0" stroke-width="2"/><circle cx="476" cy="6" r="2.8" fill="#1f1f1f" stroke="#1c5fb0" stroke-width="2"/></svg>
<svg style="left:1430px;top:84px" width="10" height="7"><path d="M0.5 0.5 H9.5 L5 6.5 Z" fill="#f0f0f0"/></svg>
<div style="position:absolute;left:1511px;top:67px;width:34px;height:24px;background:#333333"></div>
<svg style="left:1515px;top:71px" width="16" height="14" viewBox="0 0 16 14"><rect x="1" y="1" width="13" height="9" rx="1" fill="none" stroke="#ececec" stroke-width="1.3"/><path d="M5 12.5 H10 M7.5 10 V12.5" stroke="#ececec" stroke-width="1.3"/></svg>
<div style="position:absolute;left:28px;top:91px;width:25px;height:794px;background:#333333"></div>
<div style="position:absolute;left:28px;top:102.5px;width:25px;height:782.5px;background:#1f1f1f"></div>
<svg style="left:28px;top:91px" width="25" height="794"><path d="M20 5.5 H25" stroke="#e0e0e0" stroke-width="1"/><path d="M8 11.5 H25" stroke="#e0e0e0" stroke-width="1"/><text transform="translate(17.8,13.8) rotate(-90)" text-anchor="end" font-size="12" fill="#e6e6e6" font-family="Liberation Sans">0</text><path d="M20 17.5 H25" stroke="#e0e0e0" stroke-width="1"/><path d="M20 24.5 H25" stroke="#e0e0e0" stroke-width="1"/><path d="M20 30.5 H25" stroke="#e0e0e0" stroke-width="1"/><path d="M20 37.5 H25" stroke="#e0e0e0" stroke-width="1"/><path d="M16 43.5 H25" stroke="#e0e0e0" stroke-width="1"/><path d="M20 50.5 H25" stroke="#e0e0e0" stroke-width="1"/><path d="M20 56.5 H25" stroke="#e0e0e0" stroke-width="1"/><path d="M20 63.5 H25" stroke="#e0e0e0" stroke-width="1"/><path d="M20 69.5 H25" stroke="#e0e0e0" stroke-width="1"/><path d="M8 76.5 H25" stroke="#e0e0e0" stroke-width="1"/><text transform="translate(17.8,78.8) rotate(-90)" text-anchor="end" font-size="12" fill="#e6e6e6" font-family="Liberation Sans">25</text><path d="M20 82.5 H25" stroke="#e0e0e0" stroke-width="1"/><path d="M20 89.5 H25" stroke="#e0e0e0" stroke-width="1"/><path d="M20 95.5 H25" stroke="#e0e0e0" stroke-width="1"/><path d="M20 102.5 H25" stroke="#e0e0e0" stroke-width="1"/><path d="M16 108.5 H25" stroke="#e0e0e0" stroke-width="1"/><path d="M20 115.5 H25" stroke="#e0e0e0" stroke-width="1"/><path d="M20 121.5 H25" stroke="#e0e0e0" stroke-width="1"/><path d="M20 128.5 H25" stroke="#e0e0e0" stroke-width="1"/><path d="M20 134.5 H25" stroke="#e0e0e0" stroke-width="1"/><path d="M8 141.5 H25" stroke="#e0e0e0" stroke-width="1"/><text transform="translate(17.8,143.8) rotate(-90)" text-anchor="end" font-size="12" fill="#e6e6e6" font-family="Liberation Sans">50</text><path d="M20 147.5 H25" stroke="#e0e0e0" stroke-width="1"/><path d="M20 154.5 H25" stroke="#e0e0e0" stroke-width="1"/><path d="M20 160.5 H25" stroke="#e0e0e0" stroke-width="1"/><path d="M20 167.5 H25" stroke="#e0e0e0" stroke-width="1"/><path d="M16 173.5 H25" stroke="#e0e0e0" stroke-width="1"/><path d="M20 180.5 H25" stroke="#e0e0e0" stroke-width="1"/><path d="M20 186.5 H25" stroke="#e0e0e0" stroke-width="1"/><path d="M20 193.5 H25" stroke="#e0e0e0" stroke-width="1"/><path d="M20 199.5 H25" stroke="#e0e0e0" stroke-width="1"/><path d="M8 206.5 H25" stroke="#e0e0e0" stroke-width="1"/><text transform="translate(17.8,208.8) rotate(-90)" text-anchor="end" font-size="12" fill="#e6e6e6" font-family="Liberation Sans">75</text><path d="M20 212.5 H25" stroke="#e0e0e0" stroke-width="1"/><path d="M20 219.5 H25" stroke="#e0e0e0" stroke-width="1"/><path d="M20 225.5 H25" stroke="#e0e0e0" stroke-width="1"/><path d="M20 232.5 H25" stroke="#e0e0e0" stroke-width="1"/><path d="M16 238.5 H25" stroke="#e0e0e0" stroke-width="1"/><path d="M20 245.5 H25" stroke="#e0e0e0" stroke-width="1"/><path d="M20 251.5 H25" stroke="#e0e0e0" stroke-width="1"/><path d="M20 258.5 H25" stroke="#e0e0e0" stroke-width="1"/><path d="M20 264.5 H25" stroke="#e0e0e0" stroke-width="1"/><path d="M8 271.5 H25" stroke="#e0e0e0" stroke-width="1"/><text transform="translate(17.8,273.8) rotate(-90)" text-anchor="end" font-size="12" fill="#e6e6e6" font-family="Liberation Sans">100</text><path d="M20 277.5 H25" stroke="#e0e0e0" stroke-width="1"/><path d="M20 284.5 H25" stroke="#e0e0e0" stroke-width="1"/><path d="M20 290.5 H25" stroke="#e0e0e0" stroke-width="1"/><path d="M20 297.5 H25" stroke="#e0e0e0" stroke-width="1"/><path d="M16 303.5 H25" stroke="#e0e0e0" stroke-width="1"/><path d="M20 310.5 H25" stroke="#e0e0e0" stroke-width="1"/><path d="M20 316.5 H25" stroke="#e0e0e0" stroke-width="1"/><path d="M20 323.5 H25" stroke="#e0e0e0" stroke-width="1"/><path d="M20 329.5 H25" stroke="#e0e0e0" stroke-width="1"/><path d="M8 336.5 H25" stroke="#e0e0e0" stroke-width="1"/><text transform="translate(17.8,338.8) rotate(-90)" text-anchor="end" font-size="12" fill="#e6e6e6" font-family="Liberation Sans">125</text><path d="M20 342.5 H25" stroke="#e0e0e0" stroke-width="1"/><path d="M20 349.5 H25" stroke="#e0e0e0" stroke-width="1"/><path d="M20 355.5 H25" stroke="#e0e0e0" stroke-width="1"/><path d="M20 362.5 H25" stroke="#e0e0e0" stroke-width="1"/><path d="M16 368.5 H25" stroke="#e0e0e0" stroke-width="1"/><path d="M20 375.5 H25" stroke="#e0e0e0" stroke-width="1"/><path d="M20 381.5 H25" stroke="#e0e0e0" stroke-width="1"/><path d="M20 388.5 H25" stroke="#e0e0e0" stroke-width="1"/><path d="M20 394.5 H25" stroke="#e0e0e0" stroke-width="1"/><path d="M8 401.5 H25" stroke="#e0e0e0" stroke-width="1"/><text transform="translate(17.8,403.8) rotate(-90)" text-anchor="end" font-size="12" fill="#e6e6e6" font-family="Liberation Sans">150</text><path d="M20 407.5 H25" stroke="#e0e0e0" stroke-width="1"/><path d="M20 414.5 H25" stroke="#e0e0e0" stroke-width="1"/><path d="M20 420.5 H25" stroke="#e0e0e0" stroke-width="1"/><path d="M20 427.5 H25" stroke="#e0e0e0" stroke-width="1"/><path d="M16 433.5 H25" stroke="#e0e0e0" stroke-width="1"/><path d="M20 440.5 H25" stroke="#e0e0e0" stroke-width="1"/><path d="M20 446.5 H25" stroke="#e0e0e0" stroke-width="1"/><path d="M20 453.5 H25" stroke="#e0e0e0" stroke-width="1"/><path d="M20 459.5 H25" stroke="#e0e0e0" stroke-width="1"/><path d="M8 466.5 H25" stroke="#e0e0e0" stroke-width="1"/><text transform="translate(17.8,468.8) rotate(-90)" text-anchor="end" font-size="12" fill="#e6e6e6" font-family="Liberation Sans">175</text><path d="M20 472.5 H25" stroke="#e0e0e0" stroke-width="1"/><path d="M20 479.5 H25" stroke="#e0e0e0" stroke-width="1"/><path d="M20 485.5 H25" stroke="#e0e0e0" stroke-width="1"/><path d="M20 492.5 H25" stroke="#e0e0e0" stroke-width="1"/><path d="M16 498.5 H25" stroke="#e0e0e0" stroke-width="1"/><path d="M20 505.5 H25" stroke="#e0e0e0" stroke-width="1"/><path d="M20 511.5 H25" stroke="#e0e0e0" stroke-width="1"/><path d="M20 518.5 H25" stroke="#e0e0e0" stroke-width="1"/><path d="M20 524.5 H25" stroke="#e0e0e0" stroke-width="1"/><path d="M8 531.5 H25" stroke="#e0e0e0" stroke-width="1"/><text transform="translate(17.8,533.8) rotate(-90)" text-anchor="end" font-size="12" fill="#e6e6e6" font-family="Liberation Sans">200</text><path d="M20 537.5 H25" stroke="#e0e0e0" stroke-width="1"/><path d="M20 544.5 H25" stroke="#e0e0e0" stroke-width="1"/><path d="M20 550.5 H25" stroke="#e0e0e0" stroke-width="1"/><path d="M20 557.5 H25" stroke="#e0e0e0" stroke-width="1"/><path d="M16 563.5 H25" stroke="#e0e0e0" stroke-width="1"/><path d="M20 570.5 H25" stroke="#e0e0e0" stroke-width="1"/><path d="M20 576.5 H25" stroke="#e0e0e0" stroke-width="1"/><path d="M20 583.5 H25" stroke="#e0e0e0" stroke-width="1"/><path d="M20 589.5 H25" stroke="#e0e0e0" stroke-width="1"/><path d="M8 596.5 H25" stroke="#e0e0e0" stroke-width="1"/><text transform="translate(17.8,598.8) rotate(-90)" text-anchor="end" font-size="12" fill="#e6e6e6" font-family="Liberation Sans">225</text><path d="M20 602.5 H25" stroke="#e0e0e0" stroke-width="1"/><path d="M20 609.5 H25" stroke="#e0e0e0" stroke-width="1"/><path d="M20 615.5 H25" stroke="#e0e0e0" stroke-width="1"/><path d="M20 622.5 H25" stroke="#e0e0e0" stroke-width="1"/><path d="M16 628.5 H25" stroke="#e0e0e0" stroke-width="1"/><path d="M20 635.5 H25" stroke="#e0e0e0" stroke-width="1"/><path d="M20 641.5 H25" stroke="#e0e0e0" stroke-width="1"/><path d="M20 648.5 H25" stroke="#e0e0e0" stroke-width="1"/><path d="M20 654.5 H25" stroke="#e0e0e0" stroke-width="1"/><path d="M8 661.5 H25" stroke="#e0e0e0" stroke-width="1"/><text transform="translate(17.8,663.8) rotate(-90)" text-anchor="end" font-size="12" fill="#e6e6e6" font-family="Liberation Sans">250</text><path d="M20 667.5 H25" stroke="#e0e0e0" stroke-width="1"/><path d="M20 674.5 H25" stroke="#e0e0e0" stroke-width="1"/><path d="M20 680.5 H25" stroke="#e0e0e0" stroke-width="1"/><path d="M20 687.5 H25" stroke="#e0e0e0" stroke-width="1"/><path d="M16 693.5 H25" stroke="#e0e0e0" stroke-width="1"/><path d="M20 700.5 H25" stroke="#e0e0e0" stroke-width="1"/><path d="M20 706.5 H25" stroke="#e0e0e0" stroke-width="1"/><path d="M20 713.5 H25" stroke="#e0e0e0" stroke-width="1"/><path d="M20 719.5 H25" stroke="#e0e0e0" stroke-width="1"/><path d="M8 726.5 H25" stroke="#e0e0e0" stroke-width="1"/><text transform="translate(17.8,728.8) rotate(-90)" text-anchor="end" font-size="12" fill="#e6e6e6" font-family="Liberation Sans">275</text><path d="M20 732.5 H25" stroke="#e0e0e0" stroke-width="1"/><path d="M20 739.5 H25" stroke="#e0e0e0" stroke-width="1"/><path d="M20 745.5 H25" stroke="#e0e0e0" stroke-width="1"/><path d="M20 752.5 H25" stroke="#e0e0e0" stroke-width="1"/><path d="M16 758.5 H25" stroke="#e0e0e0" stroke-width="1"/><path d="M20 765.5 H25" stroke="#e0e0e0" stroke-width="1"/><path d="M20 771.5 H25" stroke="#e0e0e0" stroke-width="1"/><path d="M20 778.5 H25" stroke="#e0e0e0" stroke-width="1"/><path d="M20 784.5 H25" stroke="#e0e0e0" stroke-width="1"/><path d="M8 791.5 H25" stroke="#e0e0e0" stroke-width="1"/><text transform="translate(17.8,793.8) rotate(-90)" text-anchor="end" font-size="12" fill="#e6e6e6" font-family="Liberation Sans">300</text></svg>
<svg style="left:40px;top:134px" width="12" height="170"><path d="M6 6 V158" stroke="#1c5fb0" stroke-width="2"/><circle cx="6" cy="6" r="2.8" fill="#1f1f1f" stroke="#1c5fb0" stroke-width="2"/><circle cx="6" cy="158" r="2.8" fill="#1f1f1f" stroke="#1c5fb0" stroke-width="2"/></svg>
<svg style="left:46px;top:250px" width="7" height="10"><path d="M0.5 0.5 V9.5 L6.5 5 Z" fill="#f0f0f0"/></svg>
<div style="position:absolute;left:53px;top:91px;width:1458px;height:794px;background:#d1d1d1;overflow:hidden"></div>
<div style="position:absolute;left:510px;top:103px;width:545px;height:772px;background:#ffffff;box-shadow:0 0 0 1px rgba(0,0,0,0.13),1px 1px 0 rgba(70,50,50,0.45),3px 3px 5px rgba(0,0,0,0.32)"></div>
<svg style="left:530px;top:125px" width="510" height="190">
<rect x="17.5" y="15.5" width="468" height="151" fill="none" stroke="#bcbcbc" stroke-width="1"/>
<rect x="17.5" y="15.5" width="468" height="151" fill="none" stroke="#3a3ad0" stroke-width="1" stroke-dasharray="4 4"/>
<rect x="7" y="5" width="22" height="22" fill="#fff" stroke="#000" stroke-width="2"/>
<circle cx="485" cy="16" r="11.5" fill="#fff" stroke="#000" stroke-width="2"/>
<rect x="474" y="156" width="22" height="22" fill="#fff" stroke="#000" stroke-width="2"/>
<path d="M242 82 L261 101 M261 82 L242 101" stroke="#000" stroke-width="2"/>
</svg>
<div style="position:absolute;left:1511px;top:91px;width:34px;height:816px;background:#333333"></div>
<div style="position:absolute;left:1526px;top:91px;width:7px;height:794px;background:#2f2f2f"></div>
<div style="position:absolute;left:1533px;top:91px;width:12px;height:794px;background:#363636"></div>
<div style="position:absolute;left:1518px;top:361px;width:8px;height:251px;background:#a5a5a5;border-radius:4px"></div>
<div style="position:absolute;left:1537.5px;top:481.0px;width:3px;height:3px;background:#e6e6e6;border-radius:50%"></div>
<div style="position:absolute;left:1537.5px;top:485.5px;width:3px;height:3px;background:#e6e6e6;border-radius:50%"></div>
<div style="position:absolute;left:1537.5px;top:490.0px;width:3px;height:3px;background:#e6e6e6;border-radius:50%"></div>
<div style="position:absolute;left:28px;top:885px;width:1483px;height:22px;background:#333333"></div>
<div style="position:absolute;left:162px;top:892px;width:1215px;height:8px;background:#a0a0a0;border-radius:4px"></div>
<div style="position:absolute;left:1520px;top:894px;width:3px;height:3px;background:#e6e6e6;border-radius:50%"></div>
<div style="position:absolute;left:1545px;top:67px;width:323px;height:840px;background:#333333"></div>
<div style="position:absolute;left:1546px;top:72px;width:322px;height:830px;background:#2b2b2b"></div>
<div style="position:absolute;left:1545px;top:72px;width:323px;height:37px;background:#262626;border-bottom:1px solid #1e1e1e"></div>
<div style="position:absolute;left:1554px;top:72px;width:157px;height:37px;background:#2c2c2c"></div>
<div style="position:absolute;left:1554px;top:104.5px;width:157px;height:4px;background:#1a56a4"></div>
<svg style="left:1565px;top:81px" width="18" height="18" viewBox="0 0 18 18"><path d="M1.6 13 V1.6 H13" stroke="#ececec" stroke-width="1.3" fill="none"/><path d="M8.5 9.5 L15.5 2.2 L16.6 3.3 L10.2 11.2 Z" fill="#ececec"/><path d="M7 11 L8.2 9.8 L9.8 11.4 L8.6 12.6 Z" fill="#ececec"/><path d="M2 16.5 Q2.5 13.5 5.5 12.5 L7 13.8 Q6.5 16.5 2 16.5 Z" fill="#0aa0f0"/></svg>
<div style="position:absolute;left:1585.5px;top:82px;font-size:15px;line-height:1;color:#ececec;white-space:nowrap;transform:scaleX(0.9752);transform-origin:0 0;">Fill and Stroke</div>
<svg style="left:1687px;top:85px" width="10" height="10"><path d="M1 1 L9 9 M9 1 L1 9" stroke="#a8a8a8" stroke-width="1.8"/></svg>
<div style="position:absolute;left:1838px;top:75px;width:30px;height:30px;background:#2a2a2a;border-radius:5px"></div>
<svg style="left:1846px;top:85px" width="14" height="9"><path d="M1 1 L7 7 L13 1" stroke="#9a9a9a" stroke-width="1.6" fill="none"/></svg>
<div style="position:absolute;left:1546px;top:109px;width:322px;height:690px;background:#2b2b2b;border:1px solid #1f1f1f;border-top:none"></div>
<div style="position:absolute;left:1547px;top:110px;width:320px;height:28px;background:#262626"></div>
<div style="position:absolute;left:1547px;top:110px;width:189px;height:26px;background:#2b2b2b"></div>
<div style="position:absolute;left:1736px;top:110px;width:109px;height:25px;background:#2c2c2c"></div>
<div style="position:absolute;left:1736px;top:135px;width:109px;height:2.5px;background:#1e1e1e"></div>
<div style="position:absolute;left:1547px;top:136.5px;width:320px;height:1px;background:#1f1f1f"></div>
<div style="position:absolute;left:1563px;top:118px;width:13px;height:12px;background:#e8e8e8;border-radius:1px"></div>
<div style="position:absolute;left:1580.5px;top:117px;font-size:15px;line-height:1;color:#ececec;white-space:nowrap;transform:scaleX(1.0188);transform-origin:0 0;">Fill</div>
<div style="position:absolute;left:1625px;top:118px;width:13px;height:12px;border:1.5px solid #e8e8e8;border-radius:1px"></div>
<div style="position:absolute;left:1641.5px;top:117px;font-size:15px;line-height:1;color:#ececec;white-space:nowrap;">Stroke paint</div>
<div style="position:absolute;left:1615px;top:135px;width:113px;height:4px;background:#1a56a4"></div>
<svg style="left:1744px;top:117px" width="16" height="14" viewBox="0 0 16 14"><path d="M1 4 H11" stroke="#1a9ae0" stroke-width="1.6"/><path d="M9 0.5 L14 4 L9 7.5 Z" fill="#1a9ae0"/><path d="M1 8.5 H3 M5 8.5 H7" stroke="#ececec" stroke-width="1.4"/><path d="M1 12.5 H14" stroke="#ececec" stroke-width="1.6"/></svg>
<div style="position:absolute;left:1763px;top:117px;font-size:15px;line-height:1;color:#ececec;white-space:nowrap;transform:scaleX(0.9697);transform-origin:0 0;">Stroke style</div>
<svg style="left:1560px;top:150px" width="12" height="12"><path d="M1.5 1.5 L10.5 10.5 M10.5 1.5 L1.5 10.5" stroke="#ececec" stroke-width="1.8"/></svg>
<div style="position:absolute;left:1580px;top:143px;width:26px;height:26px;background:linear-gradient(#1f4f8e,#264466);border:1px solid #1a1a1a;border-radius:5px"></div>
<div style="position:absolute;left:1585px;top:148px;width:16px;height:16px;background:#0098e2"></div>
<svg style="left:1613px;top:148px" width="130" height="17">
<defs>
<linearGradient id="lg1"><stop offset="0" stop-color="#0a93e3"/><stop offset="1" stop-color="#ececec"/></linearGradient>
<radialGradient id="rg1"><stop offset="0" stop-color="#0a93e3"/><stop offset="1" stop-color="#ececec"/></radialGradient>
<radialGradient id="mg1" cx="0" cy="0" r="0.75"><stop offset="0" stop-color="#0a93e3"/><stop offset="0.35" stop-color="#0a93e3"/><stop offset="1" stop-color="#ececec" stop-opacity="0"/></radialGradient>
<radialGradient id="mg2" cx="1" cy="1" r="0.75"><stop offset="0" stop-color="#0a93e3"/><stop offset="0.35" stop-color="#0a93e3"/><stop offset="1" stop-color="#ececec" stop-opacity="0"/></radialGradient>
</defs>
<rect x="0" y="0" width="16" height="16" fill="url(#lg1)"/>
<rect x="28" y="0" width="16" height="16" fill="url(#rg1)"/>
<rect x="56" y="0" width="16" height="16" fill="#ececec"/><rect x="56" y="0" width="16" height="16" fill="url(#mg1)"/><rect x="56" y="0" width="16" height="16" fill="url(#mg2)"/>
<rect x="84" y="0" width="16" height="16" fill="#e8e8e8"/><path d="M88 0 L92 4 L88 8 L84 4 Z M96 0 L100 4 L96 8 L92 4 Z M88 8 L92 12 L88 16 L84 12 Z M96 8 L100 12 L96 16 L92 12 Z" fill="#2b2b2b"/>
<rect x="112.75" y="0.75" width="14.5" height="14.5" fill="none" stroke="#e8e8e8" stroke-width="1.5"/>
<rect x="115" y="3" width="10" height="10" fill="#0a93e3"/>
</svg>
<div style="position:absolute;left:1755.5px;top:146px;font-size:20px;line-height:1;color:#ececec;white-space:nowrap;"><b>?</b></div>
<div style="position:absolute;left:1808px;top:143px;width:26px;height:26px;background:linear-gradient(#1f4f8e,#264466);border:1px solid #1a1a1a;border-radius:5px"></div>
<svg style="left:1812px;top:147px" width="18" height="18" viewBox="0 0 18 18"><path d="M1.5 6 Q1.5 1.5 5 1.8 Q7.5 2 9 4.5 Q10.5 2 13 1.8 Q16.5 1.5 16.5 6 V9 Q16.5 16.5 9 16.5 Q1.5 16.5 1.5 9 Z" fill="#e8e8e8"/><path d="M9 5.5 Q12.5 10 11.5 12 Q10.5 13.8 9 13.8 Q7.5 13.8 6.5 12 Q5.5 10 9 5.5 Z" fill="#234875"/></svg>
<svg style="left:1840px;top:147px" width="18" height="18" viewBox="0 0 18 18"><path d="M1.5 6 Q1.5 1.5 5 1.8 Q7.5 2 9 4.5 Q10.5 2 13 1.8 Q16.5 1.5 16.5 6 V9 Q16.5 16.5 9 16.5 Q1.5 16.5 1.5 9 Z" fill="#e8e8e8"/></svg>
<div style="position:absolute;left:1553px;top:190px;font-size:15px;line-height:1;color:#f0f0f0;white-space:nowrap;transform:scaleX(0.9627);transform-origin:0 0;"><b>Flat color</b></div>
<div style="position:absolute;left:1757px;top:180px;width:103px;height:33px;background:#323232;border:1px solid #171717;border-radius:5px"></div>
<div style="position:absolute;left:1760px;top:183px;width:97px;height:27px;border:1px dotted #7a7a7a;border-radius:3px"></div>
<svg style="left:1767px;top:187px" width="18" height="18"><g style="isolation:isolate"><circle cx="8.5" cy="5" r="4.6" fill="#ff0000"/><circle cx="5" cy="11.5" r="4.6" fill="#00ff00" style="mix-blend-mode:screen"/><circle cx="12" cy="11.5" r="4.6" fill="#0000ff" style="mix-blend-mode:screen"/></g></svg>
<div style="position:absolute;left:1792px;top:190px;font-size:15px;line-height:1;color:#ececec;white-space:nowrap;transform:scaleX(0.8769);transform-origin:0 0;">RGB</div>
<svg style="left:1837px;top:193px" width="12" height="8"><path d="M0 0 L11 0 L5.5 6 Z" fill="#e6e6e6"/></svg>
<div style="position:absolute;left:1556.5px;top:228px;font-size:15px;line-height:1;color:#ececec;white-space:nowrap;">R:</div>
<div style="position:absolute;left:1574px;top:218px;width:208px;height:34px;background:linear-gradient(to right,#000,#ff0000)"></div>
<svg style="left:1574px;top:218px" width="208" height="34"><path d="M0 0 H4 L0 4 Z M0 34 H4 L0 30 Z" fill="#e8e8e8"/></svg>
<div style="position:absolute;left:1786px;top:218px;width:72px;height:34px;background:#2b2b2b;border:1px solid #222;border-radius:5px"></div>
<div style="position:absolute;left:1824px;top:219px;width:1px;height:32px;background:#262626"></div>
<div style="position:absolute;left:1841px;top:219px;width:1px;height:32px;background:#262626"></div>
<div style="position:absolute;left:1795px;top:227.5px;font-size:15px;line-height:1;color:#ececec;white-space:nowrap;transform:scaleX(0.9200);transform-origin:0 0;">0</div>
<div style="position:absolute;left:1826.5px;top:234.0px;width:12px;height:2px;background:#5a5a5a"></div>
<div style="position:absolute;left:1843.5px;top:234.0px;width:12px;height:2px;background:#ececec"></div>
<div style="position:absolute;left:1848.5px;top:229.0px;width:2px;height:12px;background:#ececec"></div>
<div style="position:absolute;left:1556.5px;top:266px;font-size:15px;line-height:1;color:#ececec;white-space:nowrap;">G:</div>
<div style="position:absolute;left:1574px;top:256px;width:208px;height:34px;background:linear-gradient(to right,#000,#00ff00)"></div>
<svg style="left:1574px;top:256px" width="208" height="34"><path d="M0 0 H4 L0 4 Z M0 34 H4 L0 30 Z" fill="#e8e8e8"/></svg>
<div style="position:absolute;left:1786px;top:256px;width:72px;height:34px;background:#2b2b2b;border:1px solid #222;border-radius:5px"></div>
<div style="position:absolute;left:1824px;top:257px;width:1px;height:32px;background:#262626"></div>
<div style="position:absolute;left:1841px;top:257px;width:1px;height:32px;background:#262626"></div>
<div style="position:absolute;left:1795px;top:265.5px;font-size:15px;line-height:1;color:#ececec;white-space:nowrap;transform:scaleX(0.9200);transform-origin:0 0;">0</div>
<div style="position:absolute;left:1826.5px;top:272.0px;width:12px;height:2px;background:#5a5a5a"></div>
<div style="position:absolute;left:1843.5px;top:272.0px;width:12px;height:2px;background:#ececec"></div>
<div style="position:absolute;left:1848.5px;top:267.0px;width:2px;height:12px;background:#ececec"></div>
<div style="position:absolute;left:1556.5px;top:304px;font-size:15px;line-height:1;color:#ececec;white-space:nowrap;">B:</div>
<div style="position:absolute;left:1574px;top:294px;width:208px;height:34px;background:linear-gradient(to right,#000,#0000ff)"></div>
<svg style="left:1574px;top:294px" width="208" height="34"><path d="M0 0 H4 L0 4 Z M0 34 H4 L0 30 Z" fill="#e8e8e8"/></svg>
<div style="position:absolute;left:1786px;top:294px;width:72px;height:34px;background:#2b2b2b;border:1px solid #222;border-radius:5px"></div>
<div style="position:absolute;left:1824px;top:295px;width:1px;height:32px;background:#262626"></div>
<div style="position:absolute;left:1841px;top:295px;width:1px;height:32px;background:#262626"></div>
<div style="position:absolute;left:1795px;top:303.5px;font-size:15px;line-height:1;color:#ececec;white-space:nowrap;transform:scaleX(0.9200);transform-origin:0 0;">0</div>
<div style="position:absolute;left:1826.5px;top:310.0px;width:12px;height:2px;background:#5a5a5a"></div>
<div style="position:absolute;left:1843.5px;top:310.0px;width:12px;height:2px;background:#ececec"></div>
<div style="position:absolute;left:1848.5px;top:305.0px;width:2px;height:12px;background:#ececec"></div>
<div style="position:absolute;left:1556.5px;top:342px;font-size:15px;line-height:1;color:#ececec;white-space:nowrap;">A:</div>
<div style="position:absolute;left:1574px;top:332px;width:208px;height:34px;background-color:#9a9a9a;background-image:linear-gradient(45deg,#5a5a5a 25%,transparent 25%,transparent 75%,#5a5a5a 75%),linear-gradient(45deg,#5a5a5a 25%,transparent 25%,transparent 75%,#5a5a5a 75%);background-size:16px 16px;background-position:0 0,8px 8px"></div>
<div style="position:absolute;left:1574px;top:332px;width:208px;height:34px;background:linear-gradient(to right,rgba(0,0,0,0),#000)"></div>
<svg style="left:1574px;top:332px" width="208" height="34"><path d="M208 0 H204 L208 4 Z M208 34 H204 L208 30 Z" fill="#e8e8e8"/></svg>
<div style="position:absolute;left:1786px;top:332px;width:72px;height:34px;background:#2b2b2b;border:1px solid #222;border-radius:5px"></div>
<div style="position:absolute;left:1824px;top:333px;width:1px;height:32px;background:#262626"></div>
<div style="position:absolute;left:1841px;top:333px;width:1px;height:32px;background:#262626"></div>
<div style="position:absolute;left:1795px;top:341.5px;font-size:15px;line-height:1;color:#ececec;white-space:nowrap;transform:scaleX(0.9200);transform-origin:0 0;">100</div>
<div style="position:absolute;left:1826.5px;top:348.0px;width:12px;height:2px;background:#ececec"></div>
<div style="position:absolute;left:1843.5px;top:348.0px;width:12px;height:2px;background:#5a5a5a"></div>
<div style="position:absolute;left:1848.5px;top:343.0px;width:2px;height:12px;background:#5a5a5a"></div>
<svg style="left:1545px;top:755px" width="85" height="40"><g fill="none" stroke="#8a8a8a" stroke-width="0.9"><circle cx="15.9" cy="17.5" r="3.6"/><circle cx="12" cy="25" r="3.6"/><circle cx="20.2" cy="25" r="3.6"/><circle cx="35.9" cy="20.8" r="7.4"/><rect x="33" y="18" width="5.8" height="5.8" rx="1.2"/></g><circle cx="12" cy="25" r="2.3" fill="#1e6e2a"/><circle cx="20.2" cy="25" r="2.3" fill="#9a2a7a"/></svg>
<svg style="left:1600px;top:766px" width="20" height="20" viewBox="0 0 20 20"><path d="M6.5 0.5 Q3.8 4.5 4 6 Q4.3 8 6.5 8 Q8.7 8 9 6 Q9.2 4.5 6.5 0.5 Z" fill="#0aa0f0"/><path d="M7 15.8 L13 9.5 L14.2 10.7 L8.2 17 Q7 18 6.2 17.2 Q5.6 16.6 7 15.8 Z" fill="none" stroke="#e8e8e8" stroke-width="1.3"/><path d="M11.8 8.3 L16 4.2 Q17 3.2 18 4.2 Q19 5.2 18 6.2 L13.8 10.3 Z" fill="#e8e8e8"/><path d="M11.2 7.8 L14.6 11.2" stroke="#e8e8e8" stroke-width="1.8"/></svg>
<div style="position:absolute;left:1734px;top:769px;font-size:15px;line-height:1;color:#ececec;white-space:nowrap;transform:scaleX(0.8892);transform-origin:0 0;">RGBA:</div>
<div style="position:absolute;left:1779px;top:759px;width:81px;height:33px;background:#2b2b2b;border:1px solid #1f1f1f;border-radius:5px"></div>
<div style="position:absolute;left:1787.5px;top:769px;font-size:15px;line-height:1;color:#ececec;white-space:nowrap;transform:scaleX(1.0148);transform-origin:0 0;">000000ff</div>
<div style="position:absolute;left:1652px;top:812px;font-size:15px;line-height:1;color:#ececec;white-space:nowrap;transform:scaleX(1.0032);transform-origin:0 0;">Blend mode:</div>
<div style="position:absolute;left:1741px;top:802px;width:124px;height:33px;background:#323232;border:1px solid #171717;border-radius:5px"></div>
<div style="position:absolute;left:1752px;top:812px;font-size:15px;line-height:1;color:#ececec;white-space:nowrap;transform:scaleX(1.0343);transform-origin:0 0;">Normal</div>
<svg style="left:1842px;top:815px" width="12" height="8"><path d="M0 0 L11 0 L5.5 6 Z" fill="#e6e6e6"/></svg>
<div style="position:absolute;left:1550px;top:839px;width:314px;height:27px;background:#262626;border:1px solid #1f1f1f;border-radius:5px"></div>
<div style="position:absolute;left:1551px;top:840px;width:3px;height:25px;background:#10223a"></div>
<div style="position:absolute;left:1786px;top:840px;width:1px;height:25px;background:#1f1f1f"></div>
<div style="position:absolute;left:1830px;top:840px;width:1px;height:25px;background:#222"></div>
<div style="position:absolute;left:1847px;top:840px;width:1px;height:25px;background:#222"></div>
<div style="position:absolute;left:1555px;top:846px;font-size:15px;line-height:1;color:#ececec;white-space:nowrap;transform:scaleX(0.9596);transform-origin:0 0;">Blur (%)</div>
<div style="position:absolute;left:1793.5px;top:846px;font-size:15px;line-height:1;color:#ececec;white-space:nowrap;transform:scaleX(0.9588);transform-origin:0 0;">0,0</div>
<div style="position:absolute;left:1833px;top:852px;width:11px;height:1.8px;background:#5a5a5a"></div>
<div style="position:absolute;left:1849px;top:852px;width:12px;height:1.8px;background:#e6e6e6"></div>
<div style="position:absolute;left:1854px;top:847px;width:1.8px;height:12px;background:#e6e6e6"></div>
<div style="position:absolute;left:1550px;top:870px;width:314px;height:27px;background:#262626;border:1px solid #1f1f1f;border-radius:5px"></div>
<div style="position:absolute;left:1552px;top:872px;width:234px;height:23px;background:#1752a0;border-radius:3px 0 0 3px"></div>
<div style="position:absolute;left:1830px;top:871px;width:1px;height:25px;background:#222"></div>
<div style="position:absolute;left:1847px;top:871px;width:1px;height:25px;background:#222"></div>
<div style="position:absolute;left:1555px;top:877px;font-size:15px;line-height:1;color:#f0f0f0;white-space:nowrap;transform:scaleX(0.9825);transform-origin:0 0;">Opacity (%)</div>
<div style="position:absolute;left:1794.5px;top:877px;font-size:15px;line-height:1;color:#ececec;white-space:nowrap;transform:scaleX(0.9322);transform-origin:0 0;">100,0</div>
<div style="position:absolute;left:1832px;top:883px;width:12px;height:1.8px;background:#e6e6e6"></div>
<div style="position:absolute;left:1849px;top:883px;width:12px;height:1.8px;background:#5a5a5a"></div>
<div style="position:absolute;left:1854px;top:878px;width:1.8px;height:12px;background:#5a5a5a"></div>
<div style="position:absolute;left:1868px;top:67px;width:51px;height:840px;background:#333333"></div>
<svg style="left:1887px;top:80px" width="18" height="18" viewBox="0 0 18 18"><path d="M2.5 4 H9 L12.5 7.5 V16 H2.5 Z" fill="none" stroke="#ececec" stroke-width="1.9"/><path d="M9 4 V7.5 H12.5" fill="none" stroke="#ececec" stroke-width="1.3"/><path d="M15 -0.5 L15.9 1.8 L18.3 1.9 L16.4 3.4 L17.1 5.7 L15 4.4 L12.9 5.7 L13.6 3.4 L11.7 1.9 L14.1 1.8 Z" fill="#1fa030"/></svg>
<svg style="left:1887px;top:116px" width="18" height="18" viewBox="0 0 18 18"><path d="M2 3 H7 L8.5 5 H15 V8 H5 L2 16 Z" fill="#ececec"/><path d="M5 9 H17 L14.5 16 H2.5 Z" fill="#ececec"/></svg>
<svg style="left:1887px;top:153px" width="18" height="18" viewBox="0 0 18 18"><path d="M9 1 V8 M6 5 L9 8.5 L12 5" stroke="#1fa030" stroke-width="2" fill="none"/><path d="M2 10 L4 8 H6 L7.5 11 H10.5 L12 8 H14 L16 10 V16 H2 Z" fill="#ececec"/><rect x="6" y="12" width="6" height="1.5" fill="#333"/></svg>
<svg style="left:1887px;top:189px" width="18" height="18" viewBox="0 0 18 18"><rect x="5" y="2" width="8" height="4" fill="#ececec"/><rect x="2" y="7" width="14" height="6" rx="1.5" fill="#ececec"/><rect x="5" y="11" width="8" height="5" fill="#ececec" stroke="#333" stroke-width="1"/></svg>
<svg style="left:1887px;top:230px" width="18" height="18" viewBox="0 0 18 18"><path d="M5 6 V2 H11 L15 6 V16 H5 V12" fill="none" stroke="#ececec" stroke-width="2"/><path d="M1 9 H10 M7 6 L10.5 9 L7 12" stroke="#1fa030" stroke-width="2" fill="none"/></svg>
<svg style="left:1887px;top:267px" width="18" height="18" viewBox="0 0 18 18"><path d="M11 6 V6 L7 2 H2 V16 H11 V13" fill="none" stroke="#ececec" stroke-width="2"/><path d="M8 10 H16 M13 7 L16.5 10 L13 13" stroke="#1fa030" stroke-width="2" fill="none"/></svg>
<svg style="left:1887px;top:308px" width="18" height="18" viewBox="0 0 18 18"><path d="M5 4 L2 7 L5 10" stroke="#ececec" stroke-width="2" fill="none"/><path d="M2.5 7 H11 Q15 7 15 11 V15" stroke="#ececec" stroke-width="2" fill="none"/></svg>
<svg style="left:1887px;top:346px" width="18" height="18" viewBox="0 0 18 18"><path d="M13 4 L16 7 L13 10" stroke="#7a7a7a" stroke-width="2" fill="none"/><path d="M15.5 7 H7 Q3 7 3 11 V15" stroke="#7a7a7a" stroke-width="2" fill="none"/></svg>
<svg style="left:1887px;top:387px" width="18" height="18" viewBox="0 0 18 18"><rect x="2" y="2" width="10" height="10" fill="#ececec"/><rect x="6" y="6" width="10" height="10" fill="#ececec" stroke="#333" stroke-width="1.2"/></svg>
<svg style="left:1887px;top:424px" width="18" height="18" viewBox="0 0 18 18"><circle cx="5" cy="13.5" r="2.6" fill="none" stroke="#ececec" stroke-width="1.8"/><circle cx="13" cy="13.5" r="2.6" fill="none" stroke="#ececec" stroke-width="1.8"/><path d="M6.5 11.5 L12 2 M11.5 11.5 L6 2" stroke="#ececec" stroke-width="1.8"/></svg>
<svg style="left:1887px;top:462px" width="18" height="18" viewBox="0 0 18 18"><rect x="3" y="3" width="12" height="14" rx="1" fill="none" stroke="#ececec" stroke-width="1.8"/><rect x="6" y="1.5" width="6" height="3" fill="#ececec"/><rect x="5" y="5" width="8" height="10" fill="#ececec"/></svg>
<svg style="left:1887px;top:501px" width="18" height="18" viewBox="0 0 18 18"><circle cx="8" cy="8" r="6.5" fill="#ececec"/><rect x="4.5" y="4.5" width="7" height="7" fill="none" stroke="#333" stroke-width="1.2" stroke-dasharray="1.2 1"/><path d="M12.5 12.5 L16.5 16.5" stroke="#ececec" stroke-width="2.2"/></svg>
<svg style="left:1887px;top:539px" width="18" height="18" viewBox="0 0 18 18"><circle cx="8" cy="8" r="6.5" fill="#ececec"/><circle cx="7" cy="7" r="2.6" fill="none" stroke="#333" stroke-width="1.4"/><rect x="7" y="7" width="4.5" height="4.5" fill="#333"/><path d="M12.5 12.5 L16.5 16.5" stroke="#ececec" stroke-width="2.2"/></svg>
<svg style="left:1887px;top:576px" width="18" height="18" viewBox="0 0 18 18"><circle cx="8" cy="8" r="6.5" fill="#ececec"/><rect x="5" y="3.5" width="6" height="9" fill="none" stroke="#333" stroke-width="1.4"/><path d="M12.5 12.5 L16.5 16.5" stroke="#ececec" stroke-width="2.2"/></svg>
<svg style="left:1887px;top:612px" width="18" height="18" viewBox="0 0 18 18"><path d="M1 4 V1 H4 M14 1 H17 V4 M17 14 V17 H14 M4 17 H1 V14" stroke="#9a9a9a" stroke-width="1" fill="none"/><rect x="3.5" y="3.5" width="11" height="11" fill="none" stroke="#ececec" stroke-width="1.5"/><path d="M9 6 V12 M6 9 H12" stroke="#ececec" stroke-width="1.5"/></svg>
<div style="position:absolute;left:1877px;top:219px;width:39px;height:1px;background:#2b2b2b"></div>
<div style="position:absolute;left:1877px;top:375px;width:39px;height:1px;background:#2b2b2b"></div>
<div style="position:absolute;left:1877px;top:490px;width:39px;height:1px;background:#2b2b2b"></div>
<div style="position:absolute;left:1877px;top:642px;width:39px;height:1px;background:#2b2b2b"></div>
<div style="position:absolute;left:1878.5px;top:646px;width:35px;height:34px;background:#353535;border:1px solid #161616;border-radius:5px"></div>
<svg style="left:1890px;top:660px" width="13" height="8"><path d="M0 0 L12 0 L6 6.5 Z" fill="#e6e6e6"/></svg>
<div style="position:absolute;left:0px;top:907px;width:1919px;height:38px;background:#333333"></div>
<svg style="left:137px;top:909px" width="1717" height="33"><rect x="0.5" y="0.5" width="20" height="15" fill="#1a1a1a" stroke="rgba(128,128,128,0.25)" stroke-width="1"/><rect x="22.5" y="0.5" width="20" height="15" fill="#333333" stroke="rgba(128,128,128,0.25)" stroke-width="1"/><rect x="44.5" y="0.5" width="20" height="15" fill="#4d4d4d" stroke="rgba(128,128,128,0.25)" stroke-width="1"/><rect x="66.5" y="0.5" width="20" height="15" fill="#666666" stroke="rgba(128,128,128,0.25)" stroke-width="1"/><rect x="88.5" y="0.5" width="20" height="15" fill="#999999" stroke="rgba(128,128,128,0.25)" stroke-width="1"/><rect x="110.5" y="0.5" width="20" height="15" fill="#b3b3b3" stroke="rgba(128,128,128,0.25)" stroke-width="1"/><rect x="132.5" y="0.5" width="20" height="15" fill="#cccccc" stroke="rgba(128,128,128,0.25)" stroke-width="1"/><rect x="154.5" y="0.5" width="20" height="15" fill="#e6e6e6" stroke="rgba(128,128,128,0.25)" stroke-width="1"/><rect x="176.5" y="0.5" width="20" height="15" fill="#ececec" stroke="rgba(128,128,128,0.25)" stroke-width="1"/><rect x="198.5" y="0.5" width="20" height="15" fill="#f2f2f2" stroke="rgba(128,128,128,0.25)" stroke-width="1"/><rect x="220.5" y="0.5" width="20" height="15" fill="#f9f9f9" stroke="rgba(128,128,128,0.25)" stroke-width="1"/><rect x="242.5" y="0.5" width="20" height="15" fill="#800000" stroke="rgba(128,128,128,0.25)" stroke-width="1"/><rect x="264.5" y="0.5" width="20" height="15" fill="#ff0000" stroke="rgba(128,128,128,0.25)" stroke-width="1"/><rect x="286.5" y="0.5" width="20" height="15" fill="#808000" stroke="rgba(128,128,128,0.25)" stroke-width="1"/><rect x="308.5" y="0.5" width="20" height="15" fill="#ffff00" stroke="rgba(128,128,128,0.25)" stroke-width="1"/><rect x="330.5" y="0.5" width="20" height="15" fill="#008000" stroke="rgba(128,128,128,0.25)" stroke-width="1"/><rect x="352.5" y="0.5" width="19" height="15" fill="#00ff00" stroke="rgba(128,128,128,0.25)" stroke-width="1"/><rect x="373.5" y="0.5" width="19" height="15" fill="#008080" stroke="rgba(128,128,128,0.25)" stroke-width="1"/><rect x="394.5" y="0.5" width="19" height="15" fill="#00ffff" stroke="rgba(128,128,128,0.25)" stroke-width="1"/><rect x="415.5" y="0.5" width="19" height="15" fill="#000080" stroke="rgba(128,128,128,0.25)" stroke-width="1"/><rect x="436.5" y="0.5" width="19" height="15" fill="#0000ff" stroke="rgba(128,128,128,0.25)" stroke-width="1"/><rect x="457.5" y="0.5" width="19" height="15" fill="#800080" stroke="rgba(128,128,128,0.25)" stroke-width="1"/><rect x="478.5" y="0.5" width="19" height="15" fill="#ff00ff" stroke="rgba(128,128,128,0.25)" stroke-width="1"/><rect x="499.5" y="0.5" width="19" height="15" fill="#2b0000" stroke="rgba(128,128,128,0.25)" stroke-width="1"/><rect x="520.5" y="0.5" width="19" height="15" fill="#550000" stroke="rgba(128,128,128,0.25)" stroke-width="1"/><rect x="541.5" y="0.5" width="19" height="15" fill="#800000" stroke="rgba(128,128,128,0.25)" stroke-width="1"/><rect x="562.5" y="0.5" width="19" height="15" fill="#aa0000" stroke="rgba(128,128,128,0.25)" stroke-width="1"/><rect x="583.5" y="0.5" width="19" height="15" fill="#d40000" stroke="rgba(128,128,128,0.25)" stroke-width="1"/><rect x="604.5" y="0.5" width="19" height="15" fill="#ff0000" stroke="rgba(128,128,128,0.25)" stroke-width="1"/><rect x="625.5" y="0.5" width="19" height="15" fill="#ff2a2a" stroke="rgba(128,128,128,0.25)" stroke-width="1"/><rect x="646.5" y="0.5" width="19" height="15" fill="#ff5555" stroke="rgba(128,128,128,0.25)" stroke-width="1"/><rect x="667.5" y="0.5" width="19" height="15" fill="#ff8080" stroke="rgba(128,128,128,0.25)" stroke-width="1"/><rect x="688.5" y="0.5" width="19" height="15" fill="#ffaaaa" stroke="rgba(128,128,128,0.25)" stroke-width="1"/><rect x="709.5" y="0.5" width="19" height="15" fill="#ffd5d5" stroke="rgba(128,128,128,0.25)" stroke-width="1"/><rect x="730.5" y="0.5" width="19" height="15" fill="#280b0b" stroke="rgba(128,128,128,0.25)" stroke-width="1"/><rect x="751.5" y="0.5" width="19" height="15" fill="#501616" stroke="rgba(128,128,128,0.25)" stroke-width="1"/><rect x="772.5" y="0.5" width="19" height="15" fill="#782121" stroke="rgba(128,128,128,0.25)" stroke-width="1"/><rect x="793.5" y="0.5" width="19" height="15" fill="#a02c2c" stroke="rgba(128,128,128,0.25)" stroke-width="1"/><rect x="814.5" y="0.5" width="19" height="15" fill="#c83737" stroke="rgba(128,128,128,0.25)" stroke-width="1"/><rect x="835.5" y="0.5" width="19" height="15" fill="#d35f5f" stroke="rgba(128,128,128,0.25)" stroke-width="1"/><rect x="856.5" y="0.5" width="19" height="15" fill="#de8787" stroke="rgba(128,128,128,0.25)" stroke-width="1"/><rect x="877.5" y="0.5" width="19" height="15" fill="#e9afaf" stroke="rgba(128,128,128,0.25)" stroke-width="1"/><rect x="898.5" y="0.5" width="19" height="15" fill="#f4d7d7" stroke="rgba(128,128,128,0.25)" stroke-width="1"/><rect x="919.5" y="0.5" width="19" height="15" fill="#241c1c" stroke="rgba(128,128,128,0.25)" stroke-width="1"/><rect x="940.5" y="0.5" width="19" height="15" fill="#483737" stroke="rgba(128,128,128,0.25)" stroke-width="1"/><rect x="961.5" y="0.5" width="19" height="15" fill="#6c5353" stroke="rgba(128,128,128,0.25)" stroke-width="1"/><rect x="982.5" y="0.5" width="19" height="15" fill="#916f6f" stroke="rgba(128,128,128,0.25)" stroke-width="1"/><rect x="1003.5" y="0.5" width="19" height="15" fill="#ac9393" stroke="rgba(128,128,128,0.25)" stroke-width="1"/><rect x="1024.5" y="0.5" width="19" height="15" fill="#c8b7b7" stroke="rgba(128,128,128,0.25)" stroke-width="1"/><rect x="1045.5" y="0.5" width="19" height="15" fill="#e3dbdb" stroke="rgba(128,128,128,0.25)" stroke-width="1"/><rect x="1066.5" y="0.5" width="19" height="15" fill="#2b1100" stroke="rgba(128,128,128,0.25)" stroke-width="1"/><rect x="1087.5" y="0.5" width="19" height="15" fill="#552200" stroke="rgba(128,128,128,0.25)" stroke-width="1"/><rect x="1108.5" y="0.5" width="19" height="15" fill="#803300" stroke="rgba(128,128,128,0.25)" stroke-width="1"/><rect x="1129.5" y="0.5" width="19" height="15" fill="#aa4400" stroke="rgba(128,128,128,0.25)" stroke-width="1"/><rect x="1150.5" y="0.5" width="19" height="15" fill="#d45500" stroke="rgba(128,128,128,0.25)" stroke-width="1"/><rect x="1171.5" y="0.5" width="19" height="15" fill="#ff6600" stroke="rgba(128,128,128,0.25)" stroke-width="1"/><rect x="1192.5" y="0.5" width="19" height="15" fill="#ff7f2a" stroke="rgba(128,128,128,0.25)" stroke-width="1"/><rect x="1213.5" y="0.5" width="19" height="15" fill="#ff9955" stroke="rgba(128,128,128,0.25)" stroke-width="1"/><rect x="1234.5" y="0.5" width="19" height="15" fill="#ffb380" stroke="rgba(128,128,128,0.25)" stroke-width="1"/><rect x="1255.5" y="0.5" width="19" height="15" fill="#ffccaa" stroke="rgba(128,128,128,0.25)" stroke-width="1"/><rect x="1276.5" y="0.5" width="19" height="15" fill="#ffe6d5" stroke="rgba(128,128,128,0.25)" stroke-width="1"/><rect x="1297.5" y="0.5" width="19" height="15" fill="#28170b" stroke="rgba(128,128,128,0.25)" stroke-width="1"/><rect x="1318.5" y="0.5" width="19" height="15" fill="#502d16" stroke="rgba(128,128,128,0.25)" stroke-width="1"/><rect x="1339.5" y="0.5" width="19" height="15" fill="#784421" stroke="rgba(128,128,128,0.25)" stroke-width="1"/><rect x="1360.5" y="0.5" width="19" height="15" fill="#a05a2c" stroke="rgba(128,128,128,0.25)" stroke-width="1"/><rect x="1381.5" y="0.5" width="19" height="15" fill="#c87137" stroke="rgba(128,128,128,0.25)" stroke-width="1"/><rect x="1402.5" y="0.5" width="19" height="15" fill="#d38d5f" stroke="rgba(128,128,128,0.25)" stroke-width="1"/><rect x="1423.5" y="0.5" width="19" height="15" fill="#deaa87" stroke="rgba(128,128,128,0.25)" stroke-width="1"/><rect x="1444.5" y="0.5" width="19" height="15" fill="#e9c6af" stroke="rgba(128,128,128,0.25)" stroke-width="1"/><rect x="1465.5" y="0.5" width="19" height="15" fill="#f4e3d7" stroke="rgba(128,128,128,0.25)" stroke-width="1"/><rect x="1486.5" y="0.5" width="19" height="15" fill="#241f1c" stroke="rgba(128,128,128,0.25)" stroke-width="1"/><rect x="1507.5" y="0.5" width="19" height="15" fill="#483e37" stroke="rgba(128,128,128,0.25)" stroke-width="1"/><rect x="1528.5" y="0.5" width="19" height="15" fill="#6c5d53" stroke="rgba(128,128,128,0.25)" stroke-width="1"/><rect x="1549.5" y="0.5" width="19" height="15" fill="#917c6f" stroke="rgba(128,128,128,0.25)" stroke-width="1"/><rect x="1570.5" y="0.5" width="19" height="15" fill="#ac9d93" stroke="rgba(128,128,128,0.25)" stroke-width="1"/><rect x="1591.5" y="0.5" width="19" height="15" fill="#c8beb7" stroke="rgba(128,128,128,0.25)" stroke-width="1"/><rect x="1612.5" y="0.5" width="19" height="15" fill="#e3dedb" stroke="rgba(128,128,128,0.25)" stroke-width="1"/><rect x="1633.5" y="0.5" width="19" height="15" fill="#2b2200" stroke="rgba(128,128,128,0.25)" stroke-width="1"/><rect x="1654.5" y="0.5" width="19" height="15" fill="#554400" stroke="rgba(128,128,128,0.25)" stroke-width="1"/><rect x="1675.5" y="0.5" width="19" height="15" fill="#806600" stroke="rgba(128,128,128,0.25)" stroke-width="1"/><rect x="1696.5" y="0.5" width="19" height="15" fill="#aa8800" stroke="rgba(128,128,128,0.25)" stroke-width="1"/><rect x="0.5" y="17.5" width="20" height="15" fill="#d4aa00" stroke="rgba(128,128,128,0.25)" stroke-width="1"/><rect x="22.5" y="17.5" width="20" height="15" fill="#ffcc00" stroke="rgba(128,128,128,0.25)" stroke-width="1"/><rect x="44.5" y="17.5" width="20" height="15" fill="#ffd42a" stroke="rgba(128,128,128,0.25)" stroke-width="1"/><rect x="66.5" y="17.5" width="20" height="15" fill="#ffdd55" stroke="rgba(128,128,128,0.25)" stroke-width="1"/><rect x="88.5" y="17.5" width="20" height="15" fill="#ffe680" stroke="rgba(128,128,128,0.25)" stroke-width="1"/><rect x="110.5" y="17.5" width="20" height="15" fill="#ffeeaa" stroke="rgba(128,128,128,0.25)" stroke-width="1"/><rect x="132.5" y="17.5" width="20" height="15" fill="#fff6d5" stroke="rgba(128,128,128,0.25)" stroke-width="1"/><rect x="154.5" y="17.5" width="20" height="15" fill="#28220b" stroke="rgba(128,128,128,0.25)" stroke-width="1"/><rect x="176.5" y="17.5" width="20" height="15" fill="#504416" stroke="rgba(128,128,128,0.25)" stroke-width="1"/><rect x="198.5" y="17.5" width="20" height="15" fill="#786721" stroke="rgba(128,128,128,0.25)" stroke-width="1"/><rect x="220.5" y="17.5" width="20" height="15" fill="#a0892c" stroke="rgba(128,128,128,0.25)" stroke-width="1"/><rect x="242.5" y="17.5" width="20" height="15" fill="#c8ab37" stroke="rgba(128,128,128,0.25)" stroke-width="1"/><rect x="264.5" y="17.5" width="20" height="15" fill="#d3bc5f" stroke="rgba(128,128,128,0.25)" stroke-width="1"/><rect x="286.5" y="17.5" width="20" height="15" fill="#decd87" stroke="rgba(128,128,128,0.25)" stroke-width="1"/><rect x="308.5" y="17.5" width="20" height="15" fill="#e9ddaf" stroke="rgba(128,128,128,0.25)" stroke-width="1"/><rect x="330.5" y="17.5" width="20" height="15" fill="#f4eed7" stroke="rgba(128,128,128,0.25)" stroke-width="1"/><rect x="352.5" y="17.5" width="19" height="15" fill="#24221c" stroke="rgba(128,128,128,0.25)" stroke-width="1"/><rect x="373.5" y="17.5" width="19" height="15" fill="#484537" stroke="rgba(128,128,128,0.25)" stroke-width="1"/><rect x="394.5" y="17.5" width="19" height="15" fill="#6c6753" stroke="rgba(128,128,128,0.25)" stroke-width="1"/><rect x="415.5" y="17.5" width="19" height="15" fill="#918a6f" stroke="rgba(128,128,128,0.25)" stroke-width="1"/><rect x="436.5" y="17.5" width="19" height="15" fill="#aca793" stroke="rgba(128,128,128,0.25)" stroke-width="1"/><rect x="457.5" y="17.5" width="19" height="15" fill="#c8c4b7" stroke="rgba(128,128,128,0.25)" stroke-width="1"/><rect x="478.5" y="17.5" width="19" height="15" fill="#e3e2db" stroke="rgba(128,128,128,0.25)" stroke-width="1"/><rect x="499.5" y="17.5" width="19" height="15" fill="#222b00" stroke="rgba(128,128,128,0.25)" stroke-width="1"/><rect x="520.5" y="17.5" width="19" height="15" fill="#445500" stroke="rgba(128,128,128,0.25)" stroke-width="1"/><rect x="541.5" y="17.5" width="19" height="15" fill="#668000" stroke="rgba(128,128,128,0.25)" stroke-width="1"/><rect x="562.5" y="17.5" width="19" height="15" fill="#88aa00" stroke="rgba(128,128,128,0.25)" stroke-width="1"/><rect x="583.5" y="17.5" width="19" height="15" fill="#aad400" stroke="rgba(128,128,128,0.25)" stroke-width="1"/><rect x="604.5" y="17.5" width="19" height="15" fill="#ccff00" stroke="rgba(128,128,128,0.25)" stroke-width="1"/><rect x="625.5" y="17.5" width="19" height="15" fill="#d4ff2a" stroke="rgba(128,128,128,0.25)" stroke-width="1"/><rect x="646.5" y="17.5" width="19" height="15" fill="#ddff55" stroke="rgba(128,128,128,0.25)" stroke-width="1"/><rect x="667.5" y="17.5" width="19" height="15" fill="#e5ff80" stroke="rgba(128,128,128,0.25)" stroke-width="1"/><rect x="688.5" y="17.5" width="19" height="15" fill="#eeffaa" stroke="rgba(128,128,128,0.25)" stroke-width="1"/><rect x="709.5" y="17.5" width="19" height="15" fill="#f6ffd5" stroke="rgba(128,128,128,0.25)" stroke-width="1"/><rect x="730.5" y="17.5" width="19" height="15" fill="#22280b" stroke="rgba(128,128,128,0.25)" stroke-width="1"/><rect x="751.5" y="17.5" width="19" height="15" fill="#445016" stroke="rgba(128,128,128,0.25)" stroke-width="1"/><rect x="772.5" y="17.5" width="19" height="15" fill="#677821" stroke="rgba(128,128,128,0.25)" stroke-width="1"/><rect x="793.5" y="17.5" width="19" height="15" fill="#89a02c" stroke="rgba(128,128,128,0.25)" stroke-width="1"/><rect x="814.5" y="17.5" width="19" height="15" fill="#abc837" stroke="rgba(128,128,128,0.25)" stroke-width="1"/><rect x="835.5" y="17.5" width="19" height="15" fill="#bcd35f" stroke="rgba(128,128,128,0.25)" stroke-width="1"/><rect x="856.5" y="17.5" width="19" height="15" fill="#cdde87" stroke="rgba(128,128,128,0.25)" stroke-width="1"/><rect x="877.5" y="17.5" width="19" height="15" fill="#dde9af" stroke="rgba(128,128,128,0.25)" stroke-width="1"/><rect x="898.5" y="17.5" width="19" height="15" fill="#eef4d7" stroke="rgba(128,128,128,0.25)" stroke-width="1"/><rect x="919.5" y="17.5" width="19" height="15" fill="#1f241c" stroke="rgba(128,128,128,0.25)" stroke-width="1"/><rect x="940.5" y="17.5" width="19" height="15" fill="#3e4837" stroke="rgba(128,128,128,0.25)" stroke-width="1"/><rect x="961.5" y="17.5" width="19" height="15" fill="#5d6c53" stroke="rgba(128,128,128,0.25)" stroke-width="1"/><rect x="982.5" y="17.5" width="19" height="15" fill="#7c916f" stroke="rgba(128,128,128,0.25)" stroke-width="1"/><rect x="1003.5" y="17.5" width="19" height="15" fill="#9dac93" stroke="rgba(128,128,128,0.25)" stroke-width="1"/><rect x="1024.5" y="17.5" width="19" height="15" fill="#bec8b7" stroke="rgba(128,128,128,0.25)" stroke-width="1"/><rect x="1045.5" y="17.5" width="19" height="15" fill="#dee3db" stroke="rgba(128,128,128,0.25)" stroke-width="1"/><rect x="1066.5" y="17.5" width="19" height="15" fill="#112b00" stroke="rgba(128,128,128,0.25)" stroke-width="1"/><rect x="1087.5" y="17.5" width="19" height="15" fill="#225500" stroke="rgba(128,128,128,0.25)" stroke-width="1"/><rect x="1108.5" y="17.5" width="19" height="15" fill="#338000" stroke="rgba(128,128,128,0.25)" stroke-width="1"/><rect x="1129.5" y="17.5" width="19" height="15" fill="#44aa00" stroke="rgba(128,128,128,0.25)" stroke-width="1"/><rect x="1150.5" y="17.5" width="19" height="15" fill="#55d400" stroke="rgba(128,128,128,0.25)" stroke-width="1"/><rect x="1171.5" y="17.5" width="19" height="15" fill="#66ff00" stroke="rgba(128,128,128,0.25)" stroke-width="1"/><rect x="1192.5" y="17.5" width="19" height="15" fill="#7fff2a" stroke="rgba(128,128,128,0.25)" stroke-width="1"/><rect x="1213.5" y="17.5" width="19" height="15" fill="#99ff55" stroke="rgba(128,128,128,0.25)" stroke-width="1"/><rect x="1234.5" y="17.5" width="19" height="15" fill="#b3ff80" stroke="rgba(128,128,128,0.25)" stroke-width="1"/><rect x="1255.5" y="17.5" width="19" height="15" fill="#ccffaa" stroke="rgba(128,128,128,0.25)" stroke-width="1"/><rect x="1276.5" y="17.5" width="19" height="15" fill="#e6ffd5" stroke="rgba(128,128,128,0.25)" stroke-width="1"/><rect x="1297.5" y="17.5" width="19" height="15" fill="#1c280b" stroke="rgba(128,128,128,0.25)" stroke-width="1"/><rect x="1318.5" y="17.5" width="19" height="15" fill="#2d5016" stroke="rgba(128,128,128,0.25)" stroke-width="1"/><rect x="1339.5" y="17.5" width="19" height="15" fill="#447821" stroke="rgba(128,128,128,0.25)" stroke-width="1"/><rect x="1360.5" y="17.5" width="19" height="15" fill="#5aa02c" stroke="rgba(128,128,128,0.25)" stroke-width="1"/><rect x="1381.5" y="17.5" width="19" height="15" fill="#71c837" stroke="rgba(128,128,128,0.25)" stroke-width="1"/><rect x="1402.5" y="17.5" width="19" height="15" fill="#8dd35f" stroke="rgba(128,128,128,0.25)" stroke-width="1"/><rect x="1423.5" y="17.5" width="19" height="15" fill="#aade87" stroke="rgba(128,128,128,0.25)" stroke-width="1"/><rect x="1444.5" y="17.5" width="19" height="15" fill="#c6e9af" stroke="rgba(128,128,128,0.25)" stroke-width="1"/><rect x="1465.5" y="17.5" width="19" height="15" fill="#e3f4d7" stroke="rgba(128,128,128,0.25)" stroke-width="1"/><rect x="1486.5" y="17.5" width="19" height="15" fill="#1c241c" stroke="rgba(128,128,128,0.25)" stroke-width="1"/><rect x="1507.5" y="17.5" width="19" height="15" fill="#374837" stroke="rgba(128,128,128,0.25)" stroke-width="1"/><rect x="1528.5" y="17.5" width="19" height="15" fill="#536c53" stroke="rgba(128,128,128,0.25)" stroke-width="1"/><rect x="1549.5" y="17.5" width="19" height="15" fill="#6f916f" stroke="rgba(128,128,128,0.25)" stroke-width="1"/><rect x="1570.5" y="17.5" width="19" height="15" fill="#93ac93" stroke="rgba(128,128,128,0.25)" stroke-width="1"/><rect x="1591.5" y="17.5" width="19" height="15" fill="#b7c8b7" stroke="rgba(128,128,128,0.25)" stroke-width="1"/><rect x="1612.5" y="17.5" width="19" height="15" fill="#dbe3db" stroke="rgba(128,128,128,0.25)" stroke-width="1"/><rect x="1633.5" y="17.5" width="19" height="15" fill="#002b00" stroke="rgba(128,128,128,0.25)" stroke-width="1"/><rect x="1654.5" y="17.5" width="19" height="15" fill="#005500" stroke="rgba(128,128,128,0.25)" stroke-width="1"/><rect x="1675.5" y="17.5" width="19" height="15" fill="#008000" stroke="rgba(128,128,128,0.25)" stroke-width="1"/><rect x="1696.5" y="17.5" width="19" height="15" fill="#00aa00" stroke="rgba(128,128,128,0.25)" stroke-width="1"/></svg>
<svg style="left:0px;top:909px" width="137" height="33">
<rect x="1" y="0" width="33" height="33" fill="#fff"/>
<circle cx="17.5" cy="16.5" r="5" fill="#b0b0b0"/>
<path d="M3.5 3.5 L31 29.5 M31 3.5 L3.5 29.5" stroke="#c8102e" stroke-width="2.8" stroke-linecap="round" opacity="0.92"/>
<rect x="35" y="0" width="33" height="33" fill="#000"/>
<circle cx="51.3" cy="16.3" r="9.8" fill="none" stroke="#c8c8c8" stroke-width="2"/>
<rect x="69" y="0" width="33" height="33" fill="#808080"/>
<rect x="103" y="0" width="33" height="33" fill="#ffffff"/>
</svg>
<svg style="left:1857px;top:919px" width="62" height="18"><path d="M1 10 L7 4 L13 10" stroke="#7a7a7a" stroke-width="1.8" fill="none"/><path d="M24 2.5 L30 8.5 L36 2.5" stroke="#e6e6e6" stroke-width="1.8" fill="none"/><path d="M45 5 H59 M45 10 H59 M45 15 H59" stroke="#e6e6e6" stroke-width="1.8"/></svg>
<div style="position:absolute;left:0px;top:945px;width:1919px;height:38px;background:#333333"></div>
<div style="position:absolute;left:22px;top:949px;font-size:14px;line-height:1;color:#ececec;white-space:nowrap;transform:scaleX(1.0337);transform-origin:0 0;">Fill:</div>
<div style="position:absolute;left:72px;top:949px;font-size:14px;line-height:1;color:#ececec;white-space:nowrap;transform:scaleX(1.0163);transform-origin:0 0;"><i>None</i></div>
<div style="position:absolute;left:-0.5px;top:970px;font-size:14px;line-height:1;color:#ececec;white-space:nowrap;transform:scaleX(1.0148);transform-origin:0 0;">Stroke:</div>
<div style="position:absolute;left:64px;top:965px;width:50px;height:25px;background:#000;border-radius:3px"></div>
<div style="position:absolute;left:122px;top:970px;font-size:14px;line-height:1;color:#ececec;white-space:nowrap;">0,265</div>
<div style="position:absolute;left:162.5px;top:958px;font-size:15px;line-height:1;color:#ececec;white-space:nowrap;transform:scaleX(0.9467);transform-origin:0 0;">O:</div>
<div style="position:absolute;left:182px;top:944px;width:73px;height:45px;background:#2b2b2b;border:1px solid #1f1f1f;border-radius:5px"></div>
<div style="position:absolute;left:220px;top:945px;width:1px;height:40px;background:#262626"></div>
<div style="position:absolute;left:237px;top:945px;width:1px;height:40px;background:#262626"></div>
<div style="position:absolute;left:190px;top:958px;font-size:15px;line-height:1;color:#ececec;white-space:nowrap;transform:scaleX(0.9788);transform-origin:0 0;">100</div>
<div style="position:absolute;left:223px;top:965px;width:12px;height:2px;background:#e6e6e6"></div>
<div style="position:absolute;left:240px;top:965px;width:12px;height:2px;background:#5a5a5a"></div>
<div style="position:absolute;left:245px;top:960px;width:2px;height:12px;background:#5a5a5a"></div>
<div style="position:absolute;left:266px;top:954px;width:3px;height:21px;background:#3584e4"></div>
<div style="position:absolute;left:274.5px;top:958px;font-size:15px;line-height:1;color:#ececec;white-space:nowrap;transform:scaleX(0.9391);transform-origin:0 0;">Layer 1</div>
<svg style="left:341px;top:957px" width="18" height="16" viewBox="0 0 18 16"><path d="M2 10 Q9 2.5 16 10 Q9 17 2 10 Z" fill="none" stroke="#ececec" stroke-width="1.8"/><circle cx="9" cy="10" r="2" fill="#ececec"/><path d="M9 1 V4.5 M3.5 3 L5 5.5 M14.5 3 L13 5.5" stroke="#ececec" stroke-width="1.5"/></svg>
<svg style="left:379px;top:957px" width="16" height="17" viewBox="0 0 16 17"><rect x="1" y="8" width="10" height="8" fill="#ececec"/><path d="M7.5 8 V5 A3 3 0 0 1 13.5 5 V6.5" stroke="#ececec" stroke-width="1.8" fill="none"/></svg>
<div style="position:absolute;left:405px;top:950px;width:1px;height:30px;background:#2a2a2a"></div>
<div style="position:absolute;left:411.5px;top:958px;font-size:15px;line-height:1;color:#ececec;white-space:nowrap;transform:scaleX(1.0089);transform-origin:0 0;"><b>Hold ALT</b> while hovering over item to highlight, <b>hold SHIFT</b> and click to hide/lock all.</div>
<div style="position:absolute;left:1716px;top:948px;width:1px;height:35px;background:#2c2c2c"></div>
<div style="position:absolute;left:1721.5px;top:948px;font-size:14px;line-height:1;color:#ececec;white-space:nowrap;transform:scaleX(1.0201);transform-origin:0 0;">X:</div>
<div style="position:absolute;left:1748.5px;top:948px;font-size:14px;line-height:1;color:#ececec;white-space:nowrap;transform:scaleX(1.0047);transform-origin:0 0;">355,40</div>
<div style="position:absolute;left:1721.5px;top:968px;font-size:14px;line-height:1;color:#ececec;white-space:nowrap;transform:scaleX(1.0827);transform-origin:0 0;">Y:</div>
<div style="position:absolute;left:1755.5px;top:968px;font-size:14px;line-height:1;color:#ececec;white-space:nowrap;transform:scaleX(1.0281);transform-origin:0 0;">58,40</div>
<div style="position:absolute;left:1802.5px;top:958px;font-size:15px;line-height:1;color:#ececec;white-space:nowrap;transform:scaleX(1.0504);transform-origin:0 0;">Z:</div>
<div style="position:absolute;left:1820px;top:945px;width:90px;height:45px;background:#2b2b2b;border:1px solid #1f1f1f;border-radius:5px"></div>
<div style="position:absolute;left:1876px;top:946px;width:1px;height:40px;background:#262626"></div>
<div style="position:absolute;left:1892px;top:946px;width:1px;height:40px;background:#262626"></div>
<div style="position:absolute;left:1832px;top:958px;font-size:15px;line-height:1;color:#ececec;white-space:nowrap;transform:scaleX(0.9660);transform-origin:0 0;">115%</div>
<div style="position:absolute;left:1878px;top:965px;width:12px;height:2px;background:#e6e6e6"></div>
<div style="position:absolute;left:1895px;top:965px;width:12px;height:2px;background:#e6e6e6"></div>
<div style="position:absolute;left:1900px;top:960px;width:2px;height:12px;background:#e6e6e6"></div>
</body></html>
